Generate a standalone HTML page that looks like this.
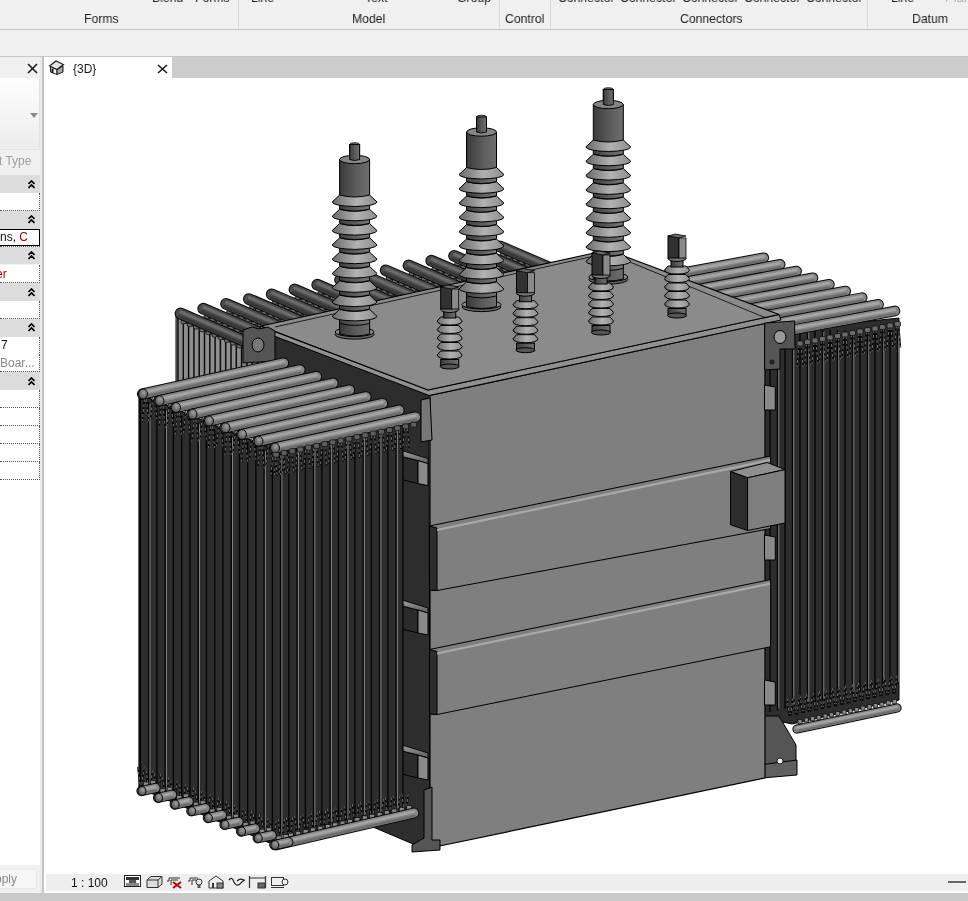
<!DOCTYPE html>
<html><head><meta charset="utf-8"><style>
*{margin:0;padding:0;box-sizing:border-box}
body{width:968px;height:901px;overflow:hidden;background:#fff;position:relative;font-family:"Liberation Sans",sans-serif;font-size:12px;color:#222}
.a{position:absolute}
.t{position:absolute;white-space:nowrap;line-height:14px;will-change:transform}
.model{position:absolute;left:0;top:0}
</style></head><body>
<div class="a" style="left:0;top:0;width:968px;height:29px;background:#f0f0f0"></div>
<div class="a" style="left:0;top:29px;width:968px;height:1px;background:#c6c6c6"></div>
<div class="a" style="left:0;top:30px;width:968px;height:26px;background:#f0f0f0"></div>
<div class="a" style="left:0;top:56px;width:968px;height:1px;background:#c6c6c6"></div>
<div class="a" style="left:238px;top:0;width:1px;height:28px;background:#d8d8d8"></div>
<div class="a" style="left:499px;top:0;width:1px;height:28px;background:#d8d8d8"></div>
<div class="a" style="left:550px;top:0;width:1px;height:28px;background:#d8d8d8"></div>
<div class="a" style="left:867px;top:0;width:1px;height:28px;background:#d8d8d8"></div>
<div class="t" style="left:152px;top:-9px;font-size:13px;transform:scaleX(0.94);transform-origin:0 0">Blend</div>
<div class="t" style="left:195px;top:-9px;font-size:13px;transform:scaleX(0.94);transform-origin:0 0">Forms</div>
<div class="t" style="left:251px;top:-9px;font-size:13px;transform:scaleX(0.94);transform-origin:0 0">Line</div>
<div class="t" style="left:365px;top:-9px;font-size:13px;transform:scaleX(0.94);transform-origin:0 0">Text</div>
<div class="t" style="left:457px;top:-9px;font-size:13px;transform:scaleX(0.94);transform-origin:0 0">Group</div>
<div class="t" style="left:558px;top:-9px;font-size:13px;transform:scaleX(0.94);transform-origin:0 0">Connector</div>
<div class="t" style="left:620px;top:-9px;font-size:13px;transform:scaleX(0.94);transform-origin:0 0">Connector</div>
<div class="t" style="left:682px;top:-9px;font-size:13px;transform:scaleX(0.94);transform-origin:0 0">Connector</div>
<div class="t" style="left:744px;top:-9px;font-size:13px;transform:scaleX(0.94);transform-origin:0 0">Connector</div>
<div class="t" style="left:806px;top:-9px;font-size:13px;transform:scaleX(0.94);transform-origin:0 0">Connector</div>
<div class="t" style="left:891px;top:-9px;font-size:13px;transform:scaleX(0.94);transform-origin:0 0">Line</div>
<div class="t" style="left:945px;top:-9px;color:#b0b0b0;font-size:13px">Plane</div>
<div class="t" style="left:84px;top:12px;font-size:13px;transform:scaleX(0.94);transform-origin:0 0">Forms</div>
<div class="t" style="left:352px;top:12px;font-size:13px;transform:scaleX(0.94);transform-origin:0 0">Model</div>
<div class="t" style="left:505px;top:12px;font-size:13px;transform:scaleX(0.94);transform-origin:0 0">Control</div>
<div class="t" style="left:680px;top:12px;font-size:13px;transform:scaleX(0.94);transform-origin:0 0">Connectors</div>
<div class="t" style="left:912px;top:12px;font-size:13px;transform:scaleX(0.94);transform-origin:0 0">Datum</div>
<!-- left panel -->
<div class="a" style="left:0;top:57px;width:42px;height:836px;background:#f0f0f0"></div>
<div class="a" style="left:40px;top:57px;width:4px;height:836px;background:#eaeaea"></div>
<div class="a" style="left:42px;top:57px;width:1.5px;height:836px;background:#c4c4c4"></div>
<svg class="a" style="left:27px;top:63px" width="11" height="11"><path d="M1,1 L10,10 M10,1 L1,10" stroke="#1a1a1a" stroke-width="1.6"/></svg>
<div class="a" style="left:0;top:78px;width:40px;height:72px;background:linear-gradient(#fdfdfd,#f6f6f6 45%,#ececec);border-right:1px solid #e2e2e2;border-bottom:1px solid #e2e2e2"></div>
<div class="a" style="left:30px;top:113px;width:0;height:0;border-left:4px solid transparent;border-right:4px solid transparent;border-top:5px solid #8a8a8a"></div>
<div class="t" style="left:-1px;top:154px;color:#a0a0a0">t Type</div>
<div class="a" style="left:0;top:175px;width:40px;height:18px;background:#dcdcdc"></div><svg class="a" style="left:28px;top:179.5px" width="7" height="9"><path d="M0.5,4 L3.5,1 L6.5,4 M0.5,8 L3.5,5 L6.5,8" stroke="#000" stroke-width="1.6" fill="none"/></svg><div class="a" style="left:0;top:210.5px;width:40px;height:18px;background:#dcdcdc"></div><svg class="a" style="left:28px;top:215.0px" width="7" height="9"><path d="M0.5,4 L3.5,1 L6.5,4 M0.5,8 L3.5,5 L6.5,8" stroke="#000" stroke-width="1.6" fill="none"/></svg><div class="a" style="left:0;top:246px;width:40px;height:18px;background:#dcdcdc"></div><svg class="a" style="left:28px;top:250.5px" width="7" height="9"><path d="M0.5,4 L3.5,1 L6.5,4 M0.5,8 L3.5,5 L6.5,8" stroke="#000" stroke-width="1.6" fill="none"/></svg><div class="a" style="left:0;top:283px;width:40px;height:18px;background:#dcdcdc"></div><svg class="a" style="left:28px;top:287.5px" width="7" height="9"><path d="M0.5,4 L3.5,1 L6.5,4 M0.5,8 L3.5,5 L6.5,8" stroke="#000" stroke-width="1.6" fill="none"/></svg><div class="a" style="left:0;top:318.5px;width:40px;height:18px;background:#dcdcdc"></div><svg class="a" style="left:28px;top:323.0px" width="7" height="9"><path d="M0.5,4 L3.5,1 L6.5,4 M0.5,8 L3.5,5 L6.5,8" stroke="#000" stroke-width="1.6" fill="none"/></svg><div class="a" style="left:0;top:372px;width:40px;height:18px;background:#dcdcdc"></div><svg class="a" style="left:28px;top:376.5px" width="7" height="9"><path d="M0.5,4 L3.5,1 L6.5,4 M0.5,8 L3.5,5 L6.5,8" stroke="#000" stroke-width="1.6" fill="none"/></svg><div class="a" style="left:0;top:193px;width:40px;height:18px;background:#fff;border-right:1px dotted #555;border-bottom:1px dotted #555"></div><div class="a" style="left:0;top:228.5px;width:40px;height:18px;background:#fff;border-right:1px dotted #555;border-bottom:1px dotted #555"></div><div class="a" style="left:0;top:265px;width:40px;height:18px;background:#fff;border-right:1px dotted #555;border-bottom:1px dotted #555"></div><div class="a" style="left:0;top:300.5px;width:40px;height:18px;background:#fff;border-right:1px dotted #555;border-bottom:1px dotted #555"></div><div class="a" style="left:0;top:336.5px;width:40px;height:18px;background:#fff;border-right:1px dotted #555;border-bottom:1px dotted #555"></div><div class="a" style="left:0;top:354px;width:40px;height:18px;background:#fff;border-right:1px dotted #555;border-bottom:1px dotted #555"></div><div class="a" style="left:0;top:390px;width:40px;height:18px;background:#fff;border-right:1px dotted #555;border-bottom:1px dotted #555"></div><div class="a" style="left:0;top:408px;width:40px;height:18px;background:#fff;border-right:1px dotted #555;border-bottom:1px dotted #555"></div><div class="a" style="left:0;top:426px;width:40px;height:18px;background:#fff;border-right:1px dotted #555;border-bottom:1px dotted #555"></div><div class="a" style="left:0;top:444px;width:40px;height:18px;background:#fff;border-right:1px dotted #555;border-bottom:1px dotted #555"></div><div class="a" style="left:0;top:462px;width:40px;height:18px;background:#fff;border-right:1px dotted #555;border-bottom:1px dotted #555"></div><div class="a" style="left:0;top:228.5px;width:40px;height:17.5px;background:#fff;border:1.5px solid #000;border-left:none"></div><div class="t" style="left:0;top:230px;color:#111">ns, <span style="color:#a00">C</span></div><div class="t" style="left:-4px;top:267px;color:#900">er</div><div class="t" style="left:1px;top:338px;color:#111">7</div><div class="t" style="left:0;top:356px;color:#888">Boar...</div>
<div class="a" style="left:0;top:480px;width:40px;height:385px;background:#fff"></div>
<div class="a" style="left:-3px;top:869px;width:40px;height:20px;background:#f6f6f6;border:1px dotted #dadada;border-radius:3px"></div>
<div class="t" style="left:-5px;top:872px;color:#8a8a8a">pply</div>
<!-- tabs -->
<div class="a" style="left:172px;top:57px;width:796px;height:21px;background:#cccccc"></div>
<svg class="a" style="left:48px;top:60px" width="17" height="15" viewBox="0 0 17 15">
<path d="M2.5,6.5 L9,9.5 L9,14.5 L2.5,12 Z" fill="#fafafa" stroke="#1a1a1a" stroke-width="1"/>
<path d="M9,9.5 L15,6 L15,12 L9,14.5 Z" fill="#a8a8a8" stroke="#1a1a1a" stroke-width="1"/>
<path d="M1.5,6 L8,1 L15.5,4.5 L9,9.5 Z" fill="#e4e4e4" stroke="#1a1a1a" stroke-width="1.1"/>
<rect x="3.5" y="8.5" width="2" height="4.5" fill="#111"/>
</svg>
<div class="t" style="left:73px;top:62px;color:#1a1a1a">{3D}</div>
<svg class="a" style="left:157px;top:64px" width="11" height="10"><path d="M1,1 L10,9 M10,1 L1,9" stroke="#1a1a1a" stroke-width="1.6"/></svg>
<!-- status -->
<div class="a" style="left:46px;top:874px;width:922px;height:17px;background:#eeeeee"></div>
<div class="a" style="left:0;top:893px;width:968px;height:8px;background:#c9c9c9"></div>
<div class="t" style="left:70.5px;top:876px;color:#111">1 : 100</div>
<div class="a" style="left:948px;top:881px;width:18px;height:2px;background:#666"></div>
<svg class="a" style="left:124px;top:875px" width="166" height="14" viewBox="0 0 166 14">
<rect x="0.5" y="0.5" width="16" height="11" fill="#fff" stroke="#222"/><rect x="2" y="2" width="13" height="3" fill="#333"/><rect x="5" y="5" width="7" height="3" fill="#555"/><rect x="2" y="8" width="13" height="3" fill="#888"/>
<path d="M23,5 L27,1.5 L38,1.5 L38,9 L34,12.5 L23,12.5 Z" fill="#ddd" stroke="#333"/><path d="M23,5 L34,5 L38,1.5 M34,5 L34,12.5" fill="none" stroke="#333"/>
<path d="M43,6 L45,6 L45,3 L56,3 M47,10 L47,5 L54,5" fill="none" stroke="#333"/><path d="M49,7 L57,13 M57,7 L49,13" stroke="#b00" stroke-width="2"/>
<path d="M64,6 L66,6 L66,3 L74,3 M68,10 L68,5 L72,5" fill="none" stroke="#333"/><circle cx="75" cy="7" r="3" fill="#eee" stroke="#333"/><rect x="73.5" y="10" width="3" height="3" fill="#555"/>
<path d="M85,6 L92,1 L99,6 L99,13 L85,13 Z" fill="#eee" stroke="#333"/><rect x="93" y="8" width="6" height="5" fill="#888" stroke="#333"/><rect x="88" y="8" width="2" height="5" fill="#333"/>
<path d="M105,5 Q108,1 110,7 Q112,12 116,9 Q118,6 121,5 M113,6 Q116,3 120,5" fill="none" stroke="#222" stroke-width="1.3"/>
<path d="M125.5,1 L125.5,13 M141.5,1 L141.5,13 M126,3 L141,3" stroke="#333" stroke-width="1.2" fill="none"/><rect x="134" y="8" width="7" height="5" fill="#666" stroke="#333"/>
<rect x="147.5" y="2.5" width="12" height="8" fill="#eee" stroke="#333"/><path d="M147,12.5 L160,12.5" stroke="#333"/><circle cx="161" cy="7" r="3" fill="#eee" stroke="#333"/>
</svg>
<svg class="model" width="968" height="901" viewBox="0 0 968 901"><defs>
<radialGradient id="gc" cx="0.6" cy="0.35" r="0.7"><stop offset="0" stop-color="#a0a0a0"/><stop offset="1" stop-color="#4a4a4a"/></radialGradient>
<linearGradient id="gt" x1="0" x2="0" y1="0" y2="1"><stop offset="0" stop-color="#a0a0a0"/><stop offset="1" stop-color="#5a5a5a"/></linearGradient>
<linearGradient id="gb" x1="0" x2="1" y1="0" y2="0"><stop offset="0" stop-color="#3a3a3a"/><stop offset="0.55" stop-color="#5c5c5c"/><stop offset="1" stop-color="#6e6e6e"/></linearGradient>
<linearGradient id="gd" x1="0" x2="1" y1="0" y2="0"><stop offset="0" stop-color="#3e3e3e"/><stop offset="0.6" stop-color="#626262"/><stop offset="1" stop-color="#777"/></linearGradient>
<linearGradient id="gs" x1="0" x2="1" y1="0" y2="0"><stop offset="0" stop-color="#6a6a6a"/><stop offset="0.55" stop-color="#b2b2b2"/><stop offset="1" stop-color="#8e8e8e"/></linearGradient>
</defs><polygon points="176.0,316.0 275.0,358.0 275.0,368.0 176.0,385.0" fill="#8e8e8e" stroke="#000" stroke-width="1" stroke-linejoin="round" /><line x1="178.0" y1="317.9" x2="178.0" y2="382.6" stroke="#0c0c0c" stroke-width="1.5" stroke-linecap="butt" /><line x1="183.3" y1="320.1" x2="183.3" y2="381.5" stroke="#0c0c0c" stroke-width="1.5" stroke-linecap="butt" /><line x1="188.6" y1="322.4" x2="188.6" y2="380.5" stroke="#0c0c0c" stroke-width="1.5" stroke-linecap="butt" /><line x1="193.9" y1="324.7" x2="193.9" y2="379.4" stroke="#0c0c0c" stroke-width="1.5" stroke-linecap="butt" /><line x1="199.2" y1="327.0" x2="199.2" y2="378.4" stroke="#0c0c0c" stroke-width="1.5" stroke-linecap="butt" /><line x1="204.5" y1="329.3" x2="204.5" y2="377.3" stroke="#0c0c0c" stroke-width="1.5" stroke-linecap="butt" /><line x1="209.8" y1="331.5" x2="209.8" y2="376.2" stroke="#0c0c0c" stroke-width="1.5" stroke-linecap="butt" /><line x1="215.1" y1="333.8" x2="215.1" y2="375.2" stroke="#0c0c0c" stroke-width="1.5" stroke-linecap="butt" /><line x1="220.4" y1="336.1" x2="220.4" y2="374.1" stroke="#0c0c0c" stroke-width="1.5" stroke-linecap="butt" /><line x1="225.7" y1="338.4" x2="225.7" y2="373.1" stroke="#0c0c0c" stroke-width="1.5" stroke-linecap="butt" /><line x1="231.0" y1="340.7" x2="231.0" y2="372.0" stroke="#0c0c0c" stroke-width="1.5" stroke-linecap="butt" /><line x1="236.3" y1="342.9" x2="236.3" y2="370.9" stroke="#0c0c0c" stroke-width="1.5" stroke-linecap="butt" /><line x1="241.6" y1="345.2" x2="241.6" y2="369.9" stroke="#0c0c0c" stroke-width="1.5" stroke-linecap="butt" /><line x1="246.9" y1="347.5" x2="246.9" y2="368.8" stroke="#0c0c0c" stroke-width="1.5" stroke-linecap="butt" /><line x1="252.2" y1="349.8" x2="252.2" y2="367.8" stroke="#0c0c0c" stroke-width="1.5" stroke-linecap="butt" /><line x1="257.5" y1="352.0" x2="257.5" y2="366.7" stroke="#0c0c0c" stroke-width="1.5" stroke-linecap="butt" /><line x1="501.7" y1="252.8" x2="621.7" y2="304.4" stroke="#2a2a2a" stroke-width="4.5" stroke-linecap="butt" /><ellipse cx="502.7" cy="254.6" rx="2.6" ry="2.2" fill="#6a6a6a" stroke="#111" stroke-width="0.8"/><ellipse cx="508.9" cy="257.3" rx="2.6" ry="2.2" fill="#6a6a6a" stroke="#111" stroke-width="0.8"/><ellipse cx="515.1" cy="259.9" rx="2.6" ry="2.2" fill="#6a6a6a" stroke="#111" stroke-width="0.8"/><ellipse cx="521.3" cy="262.6" rx="2.6" ry="2.2" fill="#6a6a6a" stroke="#111" stroke-width="0.8"/><ellipse cx="527.5" cy="265.3" rx="2.6" ry="2.2" fill="#6a6a6a" stroke="#111" stroke-width="0.8"/><ellipse cx="533.7" cy="267.9" rx="2.6" ry="2.2" fill="#6a6a6a" stroke="#111" stroke-width="0.8"/><ellipse cx="539.9" cy="270.6" rx="2.6" ry="2.2" fill="#6a6a6a" stroke="#111" stroke-width="0.8"/><ellipse cx="546.1" cy="273.3" rx="2.6" ry="2.2" fill="#6a6a6a" stroke="#111" stroke-width="0.8"/><ellipse cx="552.3" cy="275.9" rx="2.6" ry="2.2" fill="#6a6a6a" stroke="#111" stroke-width="0.8"/><ellipse cx="558.5" cy="278.6" rx="2.6" ry="2.2" fill="#6a6a6a" stroke="#111" stroke-width="0.8"/><ellipse cx="564.7" cy="281.2" rx="2.6" ry="2.2" fill="#6a6a6a" stroke="#111" stroke-width="0.8"/><ellipse cx="570.9" cy="283.9" rx="2.6" ry="2.2" fill="#6a6a6a" stroke="#111" stroke-width="0.8"/><ellipse cx="577.1" cy="286.6" rx="2.6" ry="2.2" fill="#6a6a6a" stroke="#111" stroke-width="0.8"/><ellipse cx="583.3" cy="289.2" rx="2.6" ry="2.2" fill="#6a6a6a" stroke="#111" stroke-width="0.8"/><ellipse cx="589.5" cy="291.9" rx="2.6" ry="2.2" fill="#6a6a6a" stroke="#111" stroke-width="0.8"/><line x1="499.7" y1="246.3" x2="619.7" y2="297.9" stroke="#0a0a0a" stroke-width="11.8" stroke-linecap="round" /><line x1="499.7" y1="246.3" x2="619.7" y2="297.9" stroke="#4b4b4b" stroke-width="9.8" stroke-linecap="round" /><line x1="500.3" y1="244.9" x2="620.3" y2="296.5" stroke="#6a6a6a" stroke-width="3.2" stroke-linecap="round" /><line x1="498.4" y1="249.2" x2="618.4" y2="300.8" stroke="#383838" stroke-width="2.8000000000000003" stroke-linecap="round" /><line x1="478.9" y1="257.6" x2="598.9" y2="309.2" stroke="#2a2a2a" stroke-width="4.5" stroke-linecap="butt" /><ellipse cx="479.9" cy="259.4" rx="2.6" ry="2.2" fill="#6a6a6a" stroke="#111" stroke-width="0.8"/><ellipse cx="486.1" cy="262.1" rx="2.6" ry="2.2" fill="#6a6a6a" stroke="#111" stroke-width="0.8"/><ellipse cx="492.3" cy="264.7" rx="2.6" ry="2.2" fill="#6a6a6a" stroke="#111" stroke-width="0.8"/><ellipse cx="498.5" cy="267.4" rx="2.6" ry="2.2" fill="#6a6a6a" stroke="#111" stroke-width="0.8"/><ellipse cx="504.7" cy="270.1" rx="2.6" ry="2.2" fill="#6a6a6a" stroke="#111" stroke-width="0.8"/><ellipse cx="510.9" cy="272.7" rx="2.6" ry="2.2" fill="#6a6a6a" stroke="#111" stroke-width="0.8"/><ellipse cx="517.1" cy="275.4" rx="2.6" ry="2.2" fill="#6a6a6a" stroke="#111" stroke-width="0.8"/><ellipse cx="523.3" cy="278.1" rx="2.6" ry="2.2" fill="#6a6a6a" stroke="#111" stroke-width="0.8"/><ellipse cx="529.5" cy="280.7" rx="2.6" ry="2.2" fill="#6a6a6a" stroke="#111" stroke-width="0.8"/><ellipse cx="535.7" cy="283.4" rx="2.6" ry="2.2" fill="#6a6a6a" stroke="#111" stroke-width="0.8"/><ellipse cx="541.9" cy="286.1" rx="2.6" ry="2.2" fill="#6a6a6a" stroke="#111" stroke-width="0.8"/><ellipse cx="548.1" cy="288.7" rx="2.6" ry="2.2" fill="#6a6a6a" stroke="#111" stroke-width="0.8"/><ellipse cx="554.3" cy="291.4" rx="2.6" ry="2.2" fill="#6a6a6a" stroke="#111" stroke-width="0.8"/><ellipse cx="560.5" cy="294.0" rx="2.6" ry="2.2" fill="#6a6a6a" stroke="#111" stroke-width="0.8"/><ellipse cx="566.7" cy="296.7" rx="2.6" ry="2.2" fill="#6a6a6a" stroke="#111" stroke-width="0.8"/><line x1="476.9" y1="251.1" x2="596.9" y2="302.7" stroke="#0a0a0a" stroke-width="11.8" stroke-linecap="round" /><line x1="476.9" y1="251.1" x2="596.9" y2="302.7" stroke="#4b4b4b" stroke-width="9.8" stroke-linecap="round" /><line x1="477.5" y1="249.7" x2="597.5" y2="301.3" stroke="#6a6a6a" stroke-width="3.2" stroke-linecap="round" /><line x1="475.6" y1="254.0" x2="595.6" y2="305.6" stroke="#383838" stroke-width="2.8000000000000003" stroke-linecap="round" /><line x1="456.1" y1="262.4" x2="576.1" y2="314.0" stroke="#2a2a2a" stroke-width="4.5" stroke-linecap="butt" /><ellipse cx="457.1" cy="264.2" rx="2.6" ry="2.2" fill="#6a6a6a" stroke="#111" stroke-width="0.8"/><ellipse cx="463.3" cy="266.9" rx="2.6" ry="2.2" fill="#6a6a6a" stroke="#111" stroke-width="0.8"/><ellipse cx="469.5" cy="269.5" rx="2.6" ry="2.2" fill="#6a6a6a" stroke="#111" stroke-width="0.8"/><ellipse cx="475.7" cy="272.2" rx="2.6" ry="2.2" fill="#6a6a6a" stroke="#111" stroke-width="0.8"/><ellipse cx="481.9" cy="274.9" rx="2.6" ry="2.2" fill="#6a6a6a" stroke="#111" stroke-width="0.8"/><ellipse cx="488.1" cy="277.5" rx="2.6" ry="2.2" fill="#6a6a6a" stroke="#111" stroke-width="0.8"/><ellipse cx="494.3" cy="280.2" rx="2.6" ry="2.2" fill="#6a6a6a" stroke="#111" stroke-width="0.8"/><ellipse cx="500.5" cy="282.9" rx="2.6" ry="2.2" fill="#6a6a6a" stroke="#111" stroke-width="0.8"/><ellipse cx="506.7" cy="285.5" rx="2.6" ry="2.2" fill="#6a6a6a" stroke="#111" stroke-width="0.8"/><ellipse cx="512.9" cy="288.2" rx="2.6" ry="2.2" fill="#6a6a6a" stroke="#111" stroke-width="0.8"/><ellipse cx="519.1" cy="290.8" rx="2.6" ry="2.2" fill="#6a6a6a" stroke="#111" stroke-width="0.8"/><ellipse cx="525.3" cy="293.5" rx="2.6" ry="2.2" fill="#6a6a6a" stroke="#111" stroke-width="0.8"/><ellipse cx="531.5" cy="296.2" rx="2.6" ry="2.2" fill="#6a6a6a" stroke="#111" stroke-width="0.8"/><ellipse cx="537.7" cy="298.8" rx="2.6" ry="2.2" fill="#6a6a6a" stroke="#111" stroke-width="0.8"/><ellipse cx="543.9" cy="301.5" rx="2.6" ry="2.2" fill="#6a6a6a" stroke="#111" stroke-width="0.8"/><line x1="454.1" y1="255.9" x2="574.1" y2="307.5" stroke="#0a0a0a" stroke-width="11.8" stroke-linecap="round" /><line x1="454.1" y1="255.9" x2="574.1" y2="307.5" stroke="#4b4b4b" stroke-width="9.8" stroke-linecap="round" /><line x1="454.7" y1="254.5" x2="574.7" y2="306.1" stroke="#6a6a6a" stroke-width="3.2" stroke-linecap="round" /><line x1="452.8" y1="258.8" x2="572.8" y2="310.4" stroke="#383838" stroke-width="2.8000000000000003" stroke-linecap="round" /><line x1="433.3" y1="267.2" x2="553.3" y2="318.8" stroke="#2a2a2a" stroke-width="4.5" stroke-linecap="butt" /><ellipse cx="434.3" cy="269.0" rx="2.6" ry="2.2" fill="#6a6a6a" stroke="#111" stroke-width="0.8"/><ellipse cx="440.5" cy="271.7" rx="2.6" ry="2.2" fill="#6a6a6a" stroke="#111" stroke-width="0.8"/><ellipse cx="446.7" cy="274.3" rx="2.6" ry="2.2" fill="#6a6a6a" stroke="#111" stroke-width="0.8"/><ellipse cx="452.9" cy="277.0" rx="2.6" ry="2.2" fill="#6a6a6a" stroke="#111" stroke-width="0.8"/><ellipse cx="459.1" cy="279.7" rx="2.6" ry="2.2" fill="#6a6a6a" stroke="#111" stroke-width="0.8"/><ellipse cx="465.3" cy="282.3" rx="2.6" ry="2.2" fill="#6a6a6a" stroke="#111" stroke-width="0.8"/><ellipse cx="471.5" cy="285.0" rx="2.6" ry="2.2" fill="#6a6a6a" stroke="#111" stroke-width="0.8"/><ellipse cx="477.7" cy="287.7" rx="2.6" ry="2.2" fill="#6a6a6a" stroke="#111" stroke-width="0.8"/><ellipse cx="483.9" cy="290.3" rx="2.6" ry="2.2" fill="#6a6a6a" stroke="#111" stroke-width="0.8"/><ellipse cx="490.1" cy="293.0" rx="2.6" ry="2.2" fill="#6a6a6a" stroke="#111" stroke-width="0.8"/><ellipse cx="496.3" cy="295.6" rx="2.6" ry="2.2" fill="#6a6a6a" stroke="#111" stroke-width="0.8"/><ellipse cx="502.5" cy="298.3" rx="2.6" ry="2.2" fill="#6a6a6a" stroke="#111" stroke-width="0.8"/><ellipse cx="508.7" cy="301.0" rx="2.6" ry="2.2" fill="#6a6a6a" stroke="#111" stroke-width="0.8"/><ellipse cx="514.9" cy="303.6" rx="2.6" ry="2.2" fill="#6a6a6a" stroke="#111" stroke-width="0.8"/><ellipse cx="521.1" cy="306.3" rx="2.6" ry="2.2" fill="#6a6a6a" stroke="#111" stroke-width="0.8"/><line x1="431.3" y1="260.7" x2="551.3" y2="312.3" stroke="#0a0a0a" stroke-width="11.8" stroke-linecap="round" /><line x1="431.3" y1="260.7" x2="551.3" y2="312.3" stroke="#4b4b4b" stroke-width="9.8" stroke-linecap="round" /><line x1="431.9" y1="259.3" x2="551.9" y2="310.9" stroke="#6a6a6a" stroke-width="3.2" stroke-linecap="round" /><line x1="430.0" y1="263.6" x2="550.0" y2="315.2" stroke="#383838" stroke-width="2.8000000000000003" stroke-linecap="round" /><line x1="410.5" y1="272.0" x2="530.5" y2="323.6" stroke="#2a2a2a" stroke-width="4.5" stroke-linecap="butt" /><ellipse cx="411.5" cy="273.8" rx="2.6" ry="2.2" fill="#6a6a6a" stroke="#111" stroke-width="0.8"/><ellipse cx="417.7" cy="276.5" rx="2.6" ry="2.2" fill="#6a6a6a" stroke="#111" stroke-width="0.8"/><ellipse cx="423.9" cy="279.1" rx="2.6" ry="2.2" fill="#6a6a6a" stroke="#111" stroke-width="0.8"/><ellipse cx="430.1" cy="281.8" rx="2.6" ry="2.2" fill="#6a6a6a" stroke="#111" stroke-width="0.8"/><ellipse cx="436.3" cy="284.5" rx="2.6" ry="2.2" fill="#6a6a6a" stroke="#111" stroke-width="0.8"/><ellipse cx="442.5" cy="287.1" rx="2.6" ry="2.2" fill="#6a6a6a" stroke="#111" stroke-width="0.8"/><ellipse cx="448.7" cy="289.8" rx="2.6" ry="2.2" fill="#6a6a6a" stroke="#111" stroke-width="0.8"/><ellipse cx="454.9" cy="292.5" rx="2.6" ry="2.2" fill="#6a6a6a" stroke="#111" stroke-width="0.8"/><ellipse cx="461.1" cy="295.1" rx="2.6" ry="2.2" fill="#6a6a6a" stroke="#111" stroke-width="0.8"/><ellipse cx="467.3" cy="297.8" rx="2.6" ry="2.2" fill="#6a6a6a" stroke="#111" stroke-width="0.8"/><ellipse cx="473.5" cy="300.4" rx="2.6" ry="2.2" fill="#6a6a6a" stroke="#111" stroke-width="0.8"/><ellipse cx="479.7" cy="303.1" rx="2.6" ry="2.2" fill="#6a6a6a" stroke="#111" stroke-width="0.8"/><ellipse cx="485.9" cy="305.8" rx="2.6" ry="2.2" fill="#6a6a6a" stroke="#111" stroke-width="0.8"/><ellipse cx="492.1" cy="308.4" rx="2.6" ry="2.2" fill="#6a6a6a" stroke="#111" stroke-width="0.8"/><ellipse cx="498.3" cy="311.1" rx="2.6" ry="2.2" fill="#6a6a6a" stroke="#111" stroke-width="0.8"/><line x1="408.5" y1="265.5" x2="528.5" y2="317.1" stroke="#0a0a0a" stroke-width="11.8" stroke-linecap="round" /><line x1="408.5" y1="265.5" x2="528.5" y2="317.1" stroke="#4b4b4b" stroke-width="9.8" stroke-linecap="round" /><line x1="409.1" y1="264.1" x2="529.1" y2="315.7" stroke="#6a6a6a" stroke-width="3.2" stroke-linecap="round" /><line x1="407.2" y1="268.4" x2="527.2" y2="320.0" stroke="#383838" stroke-width="2.8000000000000003" stroke-linecap="round" /><line x1="387.7" y1="276.8" x2="507.7" y2="328.4" stroke="#2a2a2a" stroke-width="4.5" stroke-linecap="butt" /><ellipse cx="388.7" cy="278.6" rx="2.6" ry="2.2" fill="#6a6a6a" stroke="#111" stroke-width="0.8"/><ellipse cx="394.9" cy="281.3" rx="2.6" ry="2.2" fill="#6a6a6a" stroke="#111" stroke-width="0.8"/><ellipse cx="401.1" cy="283.9" rx="2.6" ry="2.2" fill="#6a6a6a" stroke="#111" stroke-width="0.8"/><ellipse cx="407.3" cy="286.6" rx="2.6" ry="2.2" fill="#6a6a6a" stroke="#111" stroke-width="0.8"/><ellipse cx="413.5" cy="289.3" rx="2.6" ry="2.2" fill="#6a6a6a" stroke="#111" stroke-width="0.8"/><ellipse cx="419.7" cy="291.9" rx="2.6" ry="2.2" fill="#6a6a6a" stroke="#111" stroke-width="0.8"/><ellipse cx="425.9" cy="294.6" rx="2.6" ry="2.2" fill="#6a6a6a" stroke="#111" stroke-width="0.8"/><ellipse cx="432.1" cy="297.3" rx="2.6" ry="2.2" fill="#6a6a6a" stroke="#111" stroke-width="0.8"/><ellipse cx="438.3" cy="299.9" rx="2.6" ry="2.2" fill="#6a6a6a" stroke="#111" stroke-width="0.8"/><ellipse cx="444.5" cy="302.6" rx="2.6" ry="2.2" fill="#6a6a6a" stroke="#111" stroke-width="0.8"/><ellipse cx="450.7" cy="305.2" rx="2.6" ry="2.2" fill="#6a6a6a" stroke="#111" stroke-width="0.8"/><ellipse cx="456.9" cy="307.9" rx="2.6" ry="2.2" fill="#6a6a6a" stroke="#111" stroke-width="0.8"/><ellipse cx="463.1" cy="310.6" rx="2.6" ry="2.2" fill="#6a6a6a" stroke="#111" stroke-width="0.8"/><ellipse cx="469.3" cy="313.2" rx="2.6" ry="2.2" fill="#6a6a6a" stroke="#111" stroke-width="0.8"/><ellipse cx="475.5" cy="315.9" rx="2.6" ry="2.2" fill="#6a6a6a" stroke="#111" stroke-width="0.8"/><line x1="385.7" y1="270.3" x2="505.7" y2="321.9" stroke="#0a0a0a" stroke-width="11.8" stroke-linecap="round" /><line x1="385.7" y1="270.3" x2="505.7" y2="321.9" stroke="#4b4b4b" stroke-width="9.8" stroke-linecap="round" /><line x1="386.3" y1="268.9" x2="506.3" y2="320.5" stroke="#6a6a6a" stroke-width="3.2" stroke-linecap="round" /><line x1="384.4" y1="273.2" x2="504.4" y2="324.8" stroke="#383838" stroke-width="2.8000000000000003" stroke-linecap="round" /><line x1="364.9" y1="281.6" x2="484.9" y2="333.2" stroke="#2a2a2a" stroke-width="4.5" stroke-linecap="butt" /><ellipse cx="365.9" cy="283.4" rx="2.6" ry="2.2" fill="#6a6a6a" stroke="#111" stroke-width="0.8"/><ellipse cx="372.1" cy="286.1" rx="2.6" ry="2.2" fill="#6a6a6a" stroke="#111" stroke-width="0.8"/><ellipse cx="378.3" cy="288.7" rx="2.6" ry="2.2" fill="#6a6a6a" stroke="#111" stroke-width="0.8"/><ellipse cx="384.5" cy="291.4" rx="2.6" ry="2.2" fill="#6a6a6a" stroke="#111" stroke-width="0.8"/><ellipse cx="390.7" cy="294.1" rx="2.6" ry="2.2" fill="#6a6a6a" stroke="#111" stroke-width="0.8"/><ellipse cx="396.9" cy="296.7" rx="2.6" ry="2.2" fill="#6a6a6a" stroke="#111" stroke-width="0.8"/><ellipse cx="403.1" cy="299.4" rx="2.6" ry="2.2" fill="#6a6a6a" stroke="#111" stroke-width="0.8"/><ellipse cx="409.3" cy="302.1" rx="2.6" ry="2.2" fill="#6a6a6a" stroke="#111" stroke-width="0.8"/><ellipse cx="415.5" cy="304.7" rx="2.6" ry="2.2" fill="#6a6a6a" stroke="#111" stroke-width="0.8"/><ellipse cx="421.7" cy="307.4" rx="2.6" ry="2.2" fill="#6a6a6a" stroke="#111" stroke-width="0.8"/><ellipse cx="427.9" cy="310.1" rx="2.6" ry="2.2" fill="#6a6a6a" stroke="#111" stroke-width="0.8"/><ellipse cx="434.1" cy="312.7" rx="2.6" ry="2.2" fill="#6a6a6a" stroke="#111" stroke-width="0.8"/><ellipse cx="440.3" cy="315.4" rx="2.6" ry="2.2" fill="#6a6a6a" stroke="#111" stroke-width="0.8"/><ellipse cx="446.5" cy="318.0" rx="2.6" ry="2.2" fill="#6a6a6a" stroke="#111" stroke-width="0.8"/><ellipse cx="452.7" cy="320.7" rx="2.6" ry="2.2" fill="#6a6a6a" stroke="#111" stroke-width="0.8"/><line x1="362.9" y1="275.1" x2="482.9" y2="326.7" stroke="#0a0a0a" stroke-width="11.8" stroke-linecap="round" /><line x1="362.9" y1="275.1" x2="482.9" y2="326.7" stroke="#4b4b4b" stroke-width="9.8" stroke-linecap="round" /><line x1="363.5" y1="273.7" x2="483.5" y2="325.3" stroke="#6a6a6a" stroke-width="3.2" stroke-linecap="round" /><line x1="361.6" y1="278.0" x2="481.6" y2="329.6" stroke="#383838" stroke-width="2.8000000000000003" stroke-linecap="round" /><line x1="342.1" y1="286.4" x2="462.1" y2="338.0" stroke="#2a2a2a" stroke-width="4.5" stroke-linecap="butt" /><ellipse cx="343.1" cy="288.2" rx="2.6" ry="2.2" fill="#6a6a6a" stroke="#111" stroke-width="0.8"/><ellipse cx="349.3" cy="290.9" rx="2.6" ry="2.2" fill="#6a6a6a" stroke="#111" stroke-width="0.8"/><ellipse cx="355.5" cy="293.5" rx="2.6" ry="2.2" fill="#6a6a6a" stroke="#111" stroke-width="0.8"/><ellipse cx="361.7" cy="296.2" rx="2.6" ry="2.2" fill="#6a6a6a" stroke="#111" stroke-width="0.8"/><ellipse cx="367.9" cy="298.9" rx="2.6" ry="2.2" fill="#6a6a6a" stroke="#111" stroke-width="0.8"/><ellipse cx="374.1" cy="301.5" rx="2.6" ry="2.2" fill="#6a6a6a" stroke="#111" stroke-width="0.8"/><ellipse cx="380.3" cy="304.2" rx="2.6" ry="2.2" fill="#6a6a6a" stroke="#111" stroke-width="0.8"/><ellipse cx="386.5" cy="306.9" rx="2.6" ry="2.2" fill="#6a6a6a" stroke="#111" stroke-width="0.8"/><ellipse cx="392.7" cy="309.5" rx="2.6" ry="2.2" fill="#6a6a6a" stroke="#111" stroke-width="0.8"/><ellipse cx="398.9" cy="312.2" rx="2.6" ry="2.2" fill="#6a6a6a" stroke="#111" stroke-width="0.8"/><ellipse cx="405.1" cy="314.8" rx="2.6" ry="2.2" fill="#6a6a6a" stroke="#111" stroke-width="0.8"/><ellipse cx="411.3" cy="317.5" rx="2.6" ry="2.2" fill="#6a6a6a" stroke="#111" stroke-width="0.8"/><ellipse cx="417.5" cy="320.2" rx="2.6" ry="2.2" fill="#6a6a6a" stroke="#111" stroke-width="0.8"/><ellipse cx="423.7" cy="322.8" rx="2.6" ry="2.2" fill="#6a6a6a" stroke="#111" stroke-width="0.8"/><ellipse cx="429.9" cy="325.5" rx="2.6" ry="2.2" fill="#6a6a6a" stroke="#111" stroke-width="0.8"/><line x1="340.1" y1="279.9" x2="460.1" y2="331.5" stroke="#0a0a0a" stroke-width="11.8" stroke-linecap="round" /><line x1="340.1" y1="279.9" x2="460.1" y2="331.5" stroke="#4b4b4b" stroke-width="9.8" stroke-linecap="round" /><line x1="340.7" y1="278.5" x2="460.7" y2="330.1" stroke="#6a6a6a" stroke-width="3.2" stroke-linecap="round" /><line x1="338.8" y1="282.8" x2="458.8" y2="334.4" stroke="#383838" stroke-width="2.8000000000000003" stroke-linecap="round" /><line x1="319.3" y1="291.2" x2="439.3" y2="342.8" stroke="#2a2a2a" stroke-width="4.5" stroke-linecap="butt" /><ellipse cx="320.3" cy="293.0" rx="2.6" ry="2.2" fill="#6a6a6a" stroke="#111" stroke-width="0.8"/><ellipse cx="326.5" cy="295.7" rx="2.6" ry="2.2" fill="#6a6a6a" stroke="#111" stroke-width="0.8"/><ellipse cx="332.7" cy="298.3" rx="2.6" ry="2.2" fill="#6a6a6a" stroke="#111" stroke-width="0.8"/><ellipse cx="338.9" cy="301.0" rx="2.6" ry="2.2" fill="#6a6a6a" stroke="#111" stroke-width="0.8"/><ellipse cx="345.1" cy="303.7" rx="2.6" ry="2.2" fill="#6a6a6a" stroke="#111" stroke-width="0.8"/><ellipse cx="351.3" cy="306.3" rx="2.6" ry="2.2" fill="#6a6a6a" stroke="#111" stroke-width="0.8"/><ellipse cx="357.5" cy="309.0" rx="2.6" ry="2.2" fill="#6a6a6a" stroke="#111" stroke-width="0.8"/><ellipse cx="363.7" cy="311.7" rx="2.6" ry="2.2" fill="#6a6a6a" stroke="#111" stroke-width="0.8"/><ellipse cx="369.9" cy="314.3" rx="2.6" ry="2.2" fill="#6a6a6a" stroke="#111" stroke-width="0.8"/><ellipse cx="376.1" cy="317.0" rx="2.6" ry="2.2" fill="#6a6a6a" stroke="#111" stroke-width="0.8"/><ellipse cx="382.3" cy="319.6" rx="2.6" ry="2.2" fill="#6a6a6a" stroke="#111" stroke-width="0.8"/><ellipse cx="388.5" cy="322.3" rx="2.6" ry="2.2" fill="#6a6a6a" stroke="#111" stroke-width="0.8"/><ellipse cx="394.7" cy="325.0" rx="2.6" ry="2.2" fill="#6a6a6a" stroke="#111" stroke-width="0.8"/><ellipse cx="400.9" cy="327.6" rx="2.6" ry="2.2" fill="#6a6a6a" stroke="#111" stroke-width="0.8"/><ellipse cx="407.1" cy="330.3" rx="2.6" ry="2.2" fill="#6a6a6a" stroke="#111" stroke-width="0.8"/><line x1="317.3" y1="284.7" x2="437.3" y2="336.3" stroke="#0a0a0a" stroke-width="11.8" stroke-linecap="round" /><line x1="317.3" y1="284.7" x2="437.3" y2="336.3" stroke="#4b4b4b" stroke-width="9.8" stroke-linecap="round" /><line x1="317.9" y1="283.3" x2="437.9" y2="334.9" stroke="#6a6a6a" stroke-width="3.2" stroke-linecap="round" /><line x1="316.0" y1="287.6" x2="436.0" y2="339.2" stroke="#383838" stroke-width="2.8000000000000003" stroke-linecap="round" /><line x1="296.5" y1="296.0" x2="416.5" y2="347.6" stroke="#2a2a2a" stroke-width="4.5" stroke-linecap="butt" /><ellipse cx="297.5" cy="297.8" rx="2.6" ry="2.2" fill="#6a6a6a" stroke="#111" stroke-width="0.8"/><ellipse cx="303.7" cy="300.5" rx="2.6" ry="2.2" fill="#6a6a6a" stroke="#111" stroke-width="0.8"/><ellipse cx="309.9" cy="303.1" rx="2.6" ry="2.2" fill="#6a6a6a" stroke="#111" stroke-width="0.8"/><ellipse cx="316.1" cy="305.8" rx="2.6" ry="2.2" fill="#6a6a6a" stroke="#111" stroke-width="0.8"/><ellipse cx="322.3" cy="308.5" rx="2.6" ry="2.2" fill="#6a6a6a" stroke="#111" stroke-width="0.8"/><ellipse cx="328.5" cy="311.1" rx="2.6" ry="2.2" fill="#6a6a6a" stroke="#111" stroke-width="0.8"/><ellipse cx="334.7" cy="313.8" rx="2.6" ry="2.2" fill="#6a6a6a" stroke="#111" stroke-width="0.8"/><ellipse cx="340.9" cy="316.5" rx="2.6" ry="2.2" fill="#6a6a6a" stroke="#111" stroke-width="0.8"/><ellipse cx="347.1" cy="319.1" rx="2.6" ry="2.2" fill="#6a6a6a" stroke="#111" stroke-width="0.8"/><ellipse cx="353.3" cy="321.8" rx="2.6" ry="2.2" fill="#6a6a6a" stroke="#111" stroke-width="0.8"/><ellipse cx="359.5" cy="324.4" rx="2.6" ry="2.2" fill="#6a6a6a" stroke="#111" stroke-width="0.8"/><ellipse cx="365.7" cy="327.1" rx="2.6" ry="2.2" fill="#6a6a6a" stroke="#111" stroke-width="0.8"/><ellipse cx="371.9" cy="329.8" rx="2.6" ry="2.2" fill="#6a6a6a" stroke="#111" stroke-width="0.8"/><ellipse cx="378.1" cy="332.4" rx="2.6" ry="2.2" fill="#6a6a6a" stroke="#111" stroke-width="0.8"/><ellipse cx="384.3" cy="335.1" rx="2.6" ry="2.2" fill="#6a6a6a" stroke="#111" stroke-width="0.8"/><line x1="294.5" y1="289.5" x2="414.5" y2="341.1" stroke="#0a0a0a" stroke-width="11.8" stroke-linecap="round" /><line x1="294.5" y1="289.5" x2="414.5" y2="341.1" stroke="#4b4b4b" stroke-width="9.8" stroke-linecap="round" /><line x1="295.1" y1="288.1" x2="415.1" y2="339.7" stroke="#6a6a6a" stroke-width="3.2" stroke-linecap="round" /><line x1="293.2" y1="292.4" x2="413.2" y2="344.0" stroke="#383838" stroke-width="2.8000000000000003" stroke-linecap="round" /><line x1="273.7" y1="300.8" x2="393.7" y2="352.4" stroke="#2a2a2a" stroke-width="4.5" stroke-linecap="butt" /><ellipse cx="274.7" cy="302.6" rx="2.6" ry="2.2" fill="#6a6a6a" stroke="#111" stroke-width="0.8"/><ellipse cx="280.9" cy="305.3" rx="2.6" ry="2.2" fill="#6a6a6a" stroke="#111" stroke-width="0.8"/><ellipse cx="287.1" cy="307.9" rx="2.6" ry="2.2" fill="#6a6a6a" stroke="#111" stroke-width="0.8"/><ellipse cx="293.3" cy="310.6" rx="2.6" ry="2.2" fill="#6a6a6a" stroke="#111" stroke-width="0.8"/><ellipse cx="299.5" cy="313.3" rx="2.6" ry="2.2" fill="#6a6a6a" stroke="#111" stroke-width="0.8"/><ellipse cx="305.7" cy="315.9" rx="2.6" ry="2.2" fill="#6a6a6a" stroke="#111" stroke-width="0.8"/><ellipse cx="311.9" cy="318.6" rx="2.6" ry="2.2" fill="#6a6a6a" stroke="#111" stroke-width="0.8"/><ellipse cx="318.1" cy="321.3" rx="2.6" ry="2.2" fill="#6a6a6a" stroke="#111" stroke-width="0.8"/><ellipse cx="324.3" cy="323.9" rx="2.6" ry="2.2" fill="#6a6a6a" stroke="#111" stroke-width="0.8"/><ellipse cx="330.5" cy="326.6" rx="2.6" ry="2.2" fill="#6a6a6a" stroke="#111" stroke-width="0.8"/><ellipse cx="336.7" cy="329.2" rx="2.6" ry="2.2" fill="#6a6a6a" stroke="#111" stroke-width="0.8"/><ellipse cx="342.9" cy="331.9" rx="2.6" ry="2.2" fill="#6a6a6a" stroke="#111" stroke-width="0.8"/><ellipse cx="349.1" cy="334.6" rx="2.6" ry="2.2" fill="#6a6a6a" stroke="#111" stroke-width="0.8"/><ellipse cx="355.3" cy="337.2" rx="2.6" ry="2.2" fill="#6a6a6a" stroke="#111" stroke-width="0.8"/><ellipse cx="361.5" cy="339.9" rx="2.6" ry="2.2" fill="#6a6a6a" stroke="#111" stroke-width="0.8"/><line x1="271.7" y1="294.3" x2="391.7" y2="345.9" stroke="#0a0a0a" stroke-width="11.8" stroke-linecap="round" /><line x1="271.7" y1="294.3" x2="391.7" y2="345.9" stroke="#4b4b4b" stroke-width="9.8" stroke-linecap="round" /><line x1="272.3" y1="292.9" x2="392.3" y2="344.5" stroke="#6a6a6a" stroke-width="3.2" stroke-linecap="round" /><line x1="270.4" y1="297.2" x2="390.4" y2="348.8" stroke="#383838" stroke-width="2.8000000000000003" stroke-linecap="round" /><line x1="250.9" y1="305.6" x2="370.9" y2="357.2" stroke="#2a2a2a" stroke-width="4.5" stroke-linecap="butt" /><ellipse cx="251.9" cy="307.4" rx="2.6" ry="2.2" fill="#6a6a6a" stroke="#111" stroke-width="0.8"/><ellipse cx="258.1" cy="310.1" rx="2.6" ry="2.2" fill="#6a6a6a" stroke="#111" stroke-width="0.8"/><ellipse cx="264.3" cy="312.7" rx="2.6" ry="2.2" fill="#6a6a6a" stroke="#111" stroke-width="0.8"/><ellipse cx="270.5" cy="315.4" rx="2.6" ry="2.2" fill="#6a6a6a" stroke="#111" stroke-width="0.8"/><ellipse cx="276.7" cy="318.1" rx="2.6" ry="2.2" fill="#6a6a6a" stroke="#111" stroke-width="0.8"/><ellipse cx="282.9" cy="320.7" rx="2.6" ry="2.2" fill="#6a6a6a" stroke="#111" stroke-width="0.8"/><ellipse cx="289.1" cy="323.4" rx="2.6" ry="2.2" fill="#6a6a6a" stroke="#111" stroke-width="0.8"/><ellipse cx="295.3" cy="326.1" rx="2.6" ry="2.2" fill="#6a6a6a" stroke="#111" stroke-width="0.8"/><ellipse cx="301.5" cy="328.7" rx="2.6" ry="2.2" fill="#6a6a6a" stroke="#111" stroke-width="0.8"/><ellipse cx="307.7" cy="331.4" rx="2.6" ry="2.2" fill="#6a6a6a" stroke="#111" stroke-width="0.8"/><ellipse cx="313.9" cy="334.1" rx="2.6" ry="2.2" fill="#6a6a6a" stroke="#111" stroke-width="0.8"/><ellipse cx="320.1" cy="336.7" rx="2.6" ry="2.2" fill="#6a6a6a" stroke="#111" stroke-width="0.8"/><ellipse cx="326.3" cy="339.4" rx="2.6" ry="2.2" fill="#6a6a6a" stroke="#111" stroke-width="0.8"/><ellipse cx="332.5" cy="342.0" rx="2.6" ry="2.2" fill="#6a6a6a" stroke="#111" stroke-width="0.8"/><ellipse cx="338.7" cy="344.7" rx="2.6" ry="2.2" fill="#6a6a6a" stroke="#111" stroke-width="0.8"/><line x1="248.9" y1="299.1" x2="368.9" y2="350.7" stroke="#0a0a0a" stroke-width="11.8" stroke-linecap="round" /><line x1="248.9" y1="299.1" x2="368.9" y2="350.7" stroke="#4b4b4b" stroke-width="9.8" stroke-linecap="round" /><line x1="249.5" y1="297.7" x2="369.5" y2="349.3" stroke="#6a6a6a" stroke-width="3.2" stroke-linecap="round" /><line x1="247.6" y1="302.0" x2="367.6" y2="353.6" stroke="#383838" stroke-width="2.8000000000000003" stroke-linecap="round" /><line x1="228.1" y1="310.4" x2="348.1" y2="362.0" stroke="#2a2a2a" stroke-width="4.5" stroke-linecap="butt" /><ellipse cx="229.1" cy="312.2" rx="2.6" ry="2.2" fill="#6a6a6a" stroke="#111" stroke-width="0.8"/><ellipse cx="235.3" cy="314.9" rx="2.6" ry="2.2" fill="#6a6a6a" stroke="#111" stroke-width="0.8"/><ellipse cx="241.5" cy="317.5" rx="2.6" ry="2.2" fill="#6a6a6a" stroke="#111" stroke-width="0.8"/><ellipse cx="247.7" cy="320.2" rx="2.6" ry="2.2" fill="#6a6a6a" stroke="#111" stroke-width="0.8"/><ellipse cx="253.9" cy="322.9" rx="2.6" ry="2.2" fill="#6a6a6a" stroke="#111" stroke-width="0.8"/><ellipse cx="260.1" cy="325.5" rx="2.6" ry="2.2" fill="#6a6a6a" stroke="#111" stroke-width="0.8"/><ellipse cx="266.3" cy="328.2" rx="2.6" ry="2.2" fill="#6a6a6a" stroke="#111" stroke-width="0.8"/><ellipse cx="272.5" cy="330.9" rx="2.6" ry="2.2" fill="#6a6a6a" stroke="#111" stroke-width="0.8"/><ellipse cx="278.7" cy="333.5" rx="2.6" ry="2.2" fill="#6a6a6a" stroke="#111" stroke-width="0.8"/><ellipse cx="284.9" cy="336.2" rx="2.6" ry="2.2" fill="#6a6a6a" stroke="#111" stroke-width="0.8"/><ellipse cx="291.1" cy="338.8" rx="2.6" ry="2.2" fill="#6a6a6a" stroke="#111" stroke-width="0.8"/><ellipse cx="297.3" cy="341.5" rx="2.6" ry="2.2" fill="#6a6a6a" stroke="#111" stroke-width="0.8"/><ellipse cx="303.5" cy="344.2" rx="2.6" ry="2.2" fill="#6a6a6a" stroke="#111" stroke-width="0.8"/><ellipse cx="309.7" cy="346.8" rx="2.6" ry="2.2" fill="#6a6a6a" stroke="#111" stroke-width="0.8"/><ellipse cx="315.9" cy="349.5" rx="2.6" ry="2.2" fill="#6a6a6a" stroke="#111" stroke-width="0.8"/><line x1="226.1" y1="303.9" x2="346.1" y2="355.5" stroke="#0a0a0a" stroke-width="11.8" stroke-linecap="round" /><line x1="226.1" y1="303.9" x2="346.1" y2="355.5" stroke="#4b4b4b" stroke-width="9.8" stroke-linecap="round" /><line x1="226.7" y1="302.5" x2="346.7" y2="354.1" stroke="#6a6a6a" stroke-width="3.2" stroke-linecap="round" /><line x1="224.8" y1="306.8" x2="344.8" y2="358.4" stroke="#383838" stroke-width="2.8000000000000003" stroke-linecap="round" /><line x1="205.3" y1="315.2" x2="325.3" y2="366.8" stroke="#2a2a2a" stroke-width="4.5" stroke-linecap="butt" /><ellipse cx="206.3" cy="317.0" rx="2.6" ry="2.2" fill="#6a6a6a" stroke="#111" stroke-width="0.8"/><ellipse cx="212.5" cy="319.7" rx="2.6" ry="2.2" fill="#6a6a6a" stroke="#111" stroke-width="0.8"/><ellipse cx="218.7" cy="322.3" rx="2.6" ry="2.2" fill="#6a6a6a" stroke="#111" stroke-width="0.8"/><ellipse cx="224.9" cy="325.0" rx="2.6" ry="2.2" fill="#6a6a6a" stroke="#111" stroke-width="0.8"/><ellipse cx="231.1" cy="327.7" rx="2.6" ry="2.2" fill="#6a6a6a" stroke="#111" stroke-width="0.8"/><ellipse cx="237.3" cy="330.3" rx="2.6" ry="2.2" fill="#6a6a6a" stroke="#111" stroke-width="0.8"/><ellipse cx="243.5" cy="333.0" rx="2.6" ry="2.2" fill="#6a6a6a" stroke="#111" stroke-width="0.8"/><ellipse cx="249.7" cy="335.7" rx="2.6" ry="2.2" fill="#6a6a6a" stroke="#111" stroke-width="0.8"/><ellipse cx="255.9" cy="338.3" rx="2.6" ry="2.2" fill="#6a6a6a" stroke="#111" stroke-width="0.8"/><ellipse cx="262.1" cy="341.0" rx="2.6" ry="2.2" fill="#6a6a6a" stroke="#111" stroke-width="0.8"/><ellipse cx="268.3" cy="343.6" rx="2.6" ry="2.2" fill="#6a6a6a" stroke="#111" stroke-width="0.8"/><ellipse cx="274.5" cy="346.3" rx="2.6" ry="2.2" fill="#6a6a6a" stroke="#111" stroke-width="0.8"/><ellipse cx="280.7" cy="349.0" rx="2.6" ry="2.2" fill="#6a6a6a" stroke="#111" stroke-width="0.8"/><ellipse cx="286.9" cy="351.6" rx="2.6" ry="2.2" fill="#6a6a6a" stroke="#111" stroke-width="0.8"/><ellipse cx="293.1" cy="354.3" rx="2.6" ry="2.2" fill="#6a6a6a" stroke="#111" stroke-width="0.8"/><line x1="203.3" y1="308.7" x2="323.3" y2="360.3" stroke="#0a0a0a" stroke-width="11.8" stroke-linecap="round" /><line x1="203.3" y1="308.7" x2="323.3" y2="360.3" stroke="#4b4b4b" stroke-width="9.8" stroke-linecap="round" /><line x1="203.9" y1="307.3" x2="323.9" y2="358.9" stroke="#6a6a6a" stroke-width="3.2" stroke-linecap="round" /><line x1="202.0" y1="311.6" x2="322.0" y2="363.2" stroke="#383838" stroke-width="2.8000000000000003" stroke-linecap="round" /><line x1="182.5" y1="320.0" x2="302.5" y2="371.6" stroke="#2a2a2a" stroke-width="4.5" stroke-linecap="butt" /><ellipse cx="183.5" cy="321.8" rx="2.6" ry="2.2" fill="#6a6a6a" stroke="#111" stroke-width="0.8"/><ellipse cx="189.7" cy="324.5" rx="2.6" ry="2.2" fill="#6a6a6a" stroke="#111" stroke-width="0.8"/><ellipse cx="195.9" cy="327.1" rx="2.6" ry="2.2" fill="#6a6a6a" stroke="#111" stroke-width="0.8"/><ellipse cx="202.1" cy="329.8" rx="2.6" ry="2.2" fill="#6a6a6a" stroke="#111" stroke-width="0.8"/><ellipse cx="208.3" cy="332.5" rx="2.6" ry="2.2" fill="#6a6a6a" stroke="#111" stroke-width="0.8"/><ellipse cx="214.5" cy="335.1" rx="2.6" ry="2.2" fill="#6a6a6a" stroke="#111" stroke-width="0.8"/><ellipse cx="220.7" cy="337.8" rx="2.6" ry="2.2" fill="#6a6a6a" stroke="#111" stroke-width="0.8"/><ellipse cx="226.9" cy="340.5" rx="2.6" ry="2.2" fill="#6a6a6a" stroke="#111" stroke-width="0.8"/><ellipse cx="233.1" cy="343.1" rx="2.6" ry="2.2" fill="#6a6a6a" stroke="#111" stroke-width="0.8"/><ellipse cx="239.3" cy="345.8" rx="2.6" ry="2.2" fill="#6a6a6a" stroke="#111" stroke-width="0.8"/><ellipse cx="245.5" cy="348.4" rx="2.6" ry="2.2" fill="#6a6a6a" stroke="#111" stroke-width="0.8"/><ellipse cx="251.7" cy="351.1" rx="2.6" ry="2.2" fill="#6a6a6a" stroke="#111" stroke-width="0.8"/><ellipse cx="257.9" cy="353.8" rx="2.6" ry="2.2" fill="#6a6a6a" stroke="#111" stroke-width="0.8"/><ellipse cx="264.1" cy="356.4" rx="2.6" ry="2.2" fill="#6a6a6a" stroke="#111" stroke-width="0.8"/><ellipse cx="270.3" cy="359.1" rx="2.6" ry="2.2" fill="#6a6a6a" stroke="#111" stroke-width="0.8"/><line x1="180.5" y1="313.5" x2="300.5" y2="365.1" stroke="#0a0a0a" stroke-width="11.8" stroke-linecap="round" /><line x1="180.5" y1="313.5" x2="300.5" y2="365.1" stroke="#4b4b4b" stroke-width="9.8" stroke-linecap="round" /><line x1="181.1" y1="312.1" x2="301.1" y2="363.7" stroke="#6a6a6a" stroke-width="3.2" stroke-linecap="round" /><line x1="179.2" y1="316.4" x2="299.2" y2="368.0" stroke="#383838" stroke-width="2.8000000000000003" stroke-linecap="round" /><polygon points="764.0,332.0 899.0,318.0 899.0,700.0 792.0,724.0 764.0,718.0" fill="#2d2d2d" stroke="#000" stroke-width="1" stroke-linejoin="round" /><line x1="770.0" y1="330.0" x2="770.0" y2="712.0" stroke="#050505" stroke-width="1.4" stroke-linecap="butt" /><line x1="777.5" y1="330.0" x2="777.5" y2="710.4" stroke="#050505" stroke-width="1.4" stroke-linecap="butt" /><line x1="778.8" y1="332.0" x2="778.8" y2="708.4" stroke="#8c8c8c" stroke-width="0.9" stroke-linecap="butt" /><line x1="785.0" y1="330.0" x2="785.0" y2="708.7" stroke="#050505" stroke-width="1.4" stroke-linecap="butt" /><line x1="792.5" y1="330.0" x2="792.5" y2="707.0" stroke="#050505" stroke-width="1.4" stroke-linecap="butt" /><line x1="793.8" y1="332.0" x2="793.8" y2="705.0" stroke="#8c8c8c" stroke-width="0.9" stroke-linecap="butt" /><line x1="800.0" y1="330.0" x2="800.0" y2="705.4" stroke="#050505" stroke-width="1.4" stroke-linecap="butt" /><line x1="807.5" y1="330.0" x2="807.5" y2="703.8" stroke="#050505" stroke-width="1.4" stroke-linecap="butt" /><line x1="808.8" y1="332.0" x2="808.8" y2="701.8" stroke="#8c8c8c" stroke-width="0.9" stroke-linecap="butt" /><line x1="815.0" y1="330.0" x2="815.0" y2="702.1" stroke="#050505" stroke-width="1.4" stroke-linecap="butt" /><line x1="822.5" y1="330.0" x2="822.5" y2="700.5" stroke="#050505" stroke-width="1.4" stroke-linecap="butt" /><line x1="823.8" y1="332.0" x2="823.8" y2="698.5" stroke="#8c8c8c" stroke-width="0.9" stroke-linecap="butt" /><line x1="830.0" y1="330.0" x2="830.0" y2="698.8" stroke="#050505" stroke-width="1.4" stroke-linecap="butt" /><line x1="837.5" y1="330.0" x2="837.5" y2="697.1" stroke="#050505" stroke-width="1.4" stroke-linecap="butt" /><line x1="838.8" y1="332.0" x2="838.8" y2="695.1" stroke="#8c8c8c" stroke-width="0.9" stroke-linecap="butt" /><line x1="845.0" y1="330.0" x2="845.0" y2="695.5" stroke="#050505" stroke-width="1.4" stroke-linecap="butt" /><line x1="852.5" y1="330.0" x2="852.5" y2="693.9" stroke="#050505" stroke-width="1.4" stroke-linecap="butt" /><line x1="853.8" y1="332.0" x2="853.8" y2="691.9" stroke="#8c8c8c" stroke-width="0.9" stroke-linecap="butt" /><line x1="860.0" y1="330.0" x2="860.0" y2="692.2" stroke="#050505" stroke-width="1.4" stroke-linecap="butt" /><line x1="867.5" y1="330.0" x2="867.5" y2="690.5" stroke="#050505" stroke-width="1.4" stroke-linecap="butt" /><line x1="868.8" y1="332.0" x2="868.8" y2="688.5" stroke="#8c8c8c" stroke-width="0.9" stroke-linecap="butt" /><line x1="875.0" y1="330.0" x2="875.0" y2="688.9" stroke="#050505" stroke-width="1.4" stroke-linecap="butt" /><line x1="882.5" y1="330.0" x2="882.5" y2="687.2" stroke="#050505" stroke-width="1.4" stroke-linecap="butt" /><line x1="883.8" y1="332.0" x2="883.8" y2="685.2" stroke="#8c8c8c" stroke-width="0.9" stroke-linecap="butt" /><line x1="890.0" y1="330.0" x2="890.0" y2="685.6" stroke="#050505" stroke-width="1.4" stroke-linecap="butt" /><line x1="897.5" y1="330.0" x2="897.5" y2="684.0" stroke="#050505" stroke-width="1.4" stroke-linecap="butt" /><line x1="898.8" y1="332.0" x2="898.8" y2="682.0" stroke="#8c8c8c" stroke-width="0.9" stroke-linecap="butt" /><path d="M787.0,698.0 L789.2,716.0 M793.0,698.0 L790.8,716.0" fill="none" stroke="#000" stroke-width="1.5" /><path d="M787.0,698.0 L789.2,714.0 M793.0,698.0 L790.8,714.0" fill="none" stroke="#8a8a8a" stroke-width="0.8" stroke-dasharray="3,2"/><path d="M793.5,696.6025 L795.7,714.6025 M799.5,696.6025 L797.3,714.6025" fill="none" stroke="#000" stroke-width="1.5" /><path d="M793.5,696.6025 L795.7,712.6025 M799.5,696.6025 L797.3,712.6025" fill="none" stroke="#8a8a8a" stroke-width="0.8" stroke-dasharray="3,2"/><path d="M800.0,695.205 L802.2,713.205 M806.0,695.205 L803.8,713.205" fill="none" stroke="#000" stroke-width="1.5" /><path d="M800.0,695.205 L802.2,711.205 M806.0,695.205 L803.8,711.205" fill="none" stroke="#8a8a8a" stroke-width="0.8" stroke-dasharray="3,2"/><path d="M806.5,693.8075 L808.7,711.8075 M812.5,693.8075 L810.3,711.8075" fill="none" stroke="#000" stroke-width="1.5" /><path d="M806.5,693.8075 L808.7,709.8075 M812.5,693.8075 L810.3,709.8075" fill="none" stroke="#8a8a8a" stroke-width="0.8" stroke-dasharray="3,2"/><path d="M813.0,692.41 L815.2,710.41 M819.0,692.41 L816.8,710.41" fill="none" stroke="#000" stroke-width="1.5" /><path d="M813.0,692.41 L815.2,708.41 M819.0,692.41 L816.8,708.41" fill="none" stroke="#8a8a8a" stroke-width="0.8" stroke-dasharray="3,2"/><path d="M819.5,691.0125 L821.7,709.0125 M825.5,691.0125 L823.3,709.0125" fill="none" stroke="#000" stroke-width="1.5" /><path d="M819.5,691.0125 L821.7,707.0125 M825.5,691.0125 L823.3,707.0125" fill="none" stroke="#8a8a8a" stroke-width="0.8" stroke-dasharray="3,2"/><path d="M826.0,689.615 L828.2,707.615 M832.0,689.615 L829.8,707.615" fill="none" stroke="#000" stroke-width="1.5" /><path d="M826.0,689.615 L828.2,705.615 M832.0,689.615 L829.8,705.615" fill="none" stroke="#8a8a8a" stroke-width="0.8" stroke-dasharray="3,2"/><path d="M832.5,688.2175 L834.7,706.2175 M838.5,688.2175 L836.3,706.2175" fill="none" stroke="#000" stroke-width="1.5" /><path d="M832.5,688.2175 L834.7,704.2175 M838.5,688.2175 L836.3,704.2175" fill="none" stroke="#8a8a8a" stroke-width="0.8" stroke-dasharray="3,2"/><path d="M839.0,686.82 L841.2,704.82 M845.0,686.82 L842.8,704.82" fill="none" stroke="#000" stroke-width="1.5" /><path d="M839.0,686.82 L841.2,702.82 M845.0,686.82 L842.8,702.82" fill="none" stroke="#8a8a8a" stroke-width="0.8" stroke-dasharray="3,2"/><path d="M845.5,685.4225 L847.7,703.4225 M851.5,685.4225 L849.3,703.4225" fill="none" stroke="#000" stroke-width="1.5" /><path d="M845.5,685.4225 L847.7,701.4225 M851.5,685.4225 L849.3,701.4225" fill="none" stroke="#8a8a8a" stroke-width="0.8" stroke-dasharray="3,2"/><path d="M852.0,684.025 L854.2,702.025 M858.0,684.025 L855.8,702.025" fill="none" stroke="#000" stroke-width="1.5" /><path d="M852.0,684.025 L854.2,700.025 M858.0,684.025 L855.8,700.025" fill="none" stroke="#8a8a8a" stroke-width="0.8" stroke-dasharray="3,2"/><path d="M858.5,682.6275 L860.7,700.6275 M864.5,682.6275 L862.3,700.6275" fill="none" stroke="#000" stroke-width="1.5" /><path d="M858.5,682.6275 L860.7,698.6275 M864.5,682.6275 L862.3,698.6275" fill="none" stroke="#8a8a8a" stroke-width="0.8" stroke-dasharray="3,2"/><path d="M865.0,681.23 L867.2,699.23 M871.0,681.23 L868.8,699.23" fill="none" stroke="#000" stroke-width="1.5" /><path d="M865.0,681.23 L867.2,697.23 M871.0,681.23 L868.8,697.23" fill="none" stroke="#8a8a8a" stroke-width="0.8" stroke-dasharray="3,2"/><path d="M871.5,679.8325 L873.7,697.8325 M877.5,679.8325 L875.3,697.8325" fill="none" stroke="#000" stroke-width="1.5" /><path d="M871.5,679.8325 L873.7,695.8325 M877.5,679.8325 L875.3,695.8325" fill="none" stroke="#8a8a8a" stroke-width="0.8" stroke-dasharray="3,2"/><path d="M878.0,678.435 L880.2,696.435 M884.0,678.435 L881.8,696.435" fill="none" stroke="#000" stroke-width="1.5" /><path d="M878.0,678.435 L880.2,694.435 M884.0,678.435 L881.8,694.435" fill="none" stroke="#8a8a8a" stroke-width="0.8" stroke-dasharray="3,2"/><path d="M884.5,677.0375 L886.7,695.0375 M890.5,677.0375 L888.3,695.0375" fill="none" stroke="#000" stroke-width="1.5" /><path d="M884.5,677.0375 L886.7,693.0375 M890.5,677.0375 L888.3,693.0375" fill="none" stroke="#8a8a8a" stroke-width="0.8" stroke-dasharray="3,2"/><path d="M891.0,675.64 L893.2,693.64 M897.0,675.64 L894.8,693.64" fill="none" stroke="#000" stroke-width="1.5" /><path d="M891.0,675.64 L893.2,691.64 M897.0,675.64 L894.8,691.64" fill="none" stroke="#8a8a8a" stroke-width="0.8" stroke-dasharray="3,2"/><line x1="797.0" y1="729.0" x2="897.0" y2="708.0" stroke="#0a0a0a" stroke-width="9.3" stroke-linecap="round" /><line x1="797.0" y1="729.0" x2="897.0" y2="708.0" stroke="#878787" stroke-width="7.3" stroke-linecap="round" /><line x1="796.8" y1="727.9" x2="896.8" y2="706.9" stroke="#a4a4a4" stroke-width="2.4" stroke-linecap="round" /><line x1="797.5" y1="731.3" x2="897.5" y2="710.3" stroke="#6c6c6c" stroke-width="2.1" stroke-linecap="round" /><rect x="798.0" y="719.4" width="4" height="4" fill="#8a8a8a" stroke="#111" stroke-width="0.7"/><rect x="804.3" y="718.0" width="4" height="4" fill="#8a8a8a" stroke="#111" stroke-width="0.7"/><rect x="810.6" y="716.7" width="4" height="4" fill="#8a8a8a" stroke="#111" stroke-width="0.7"/><rect x="816.9" y="715.4" width="4" height="4" fill="#8a8a8a" stroke="#111" stroke-width="0.7"/><rect x="823.2" y="714.1" width="4" height="4" fill="#8a8a8a" stroke="#111" stroke-width="0.7"/><rect x="829.5" y="712.8" width="4" height="4" fill="#8a8a8a" stroke="#111" stroke-width="0.7"/><rect x="835.8" y="711.4" width="4" height="4" fill="#8a8a8a" stroke="#111" stroke-width="0.7"/><rect x="842.1" y="710.1" width="4" height="4" fill="#8a8a8a" stroke="#111" stroke-width="0.7"/><rect x="848.4" y="708.8" width="4" height="4" fill="#8a8a8a" stroke="#111" stroke-width="0.7"/><rect x="854.7" y="707.5" width="4" height="4" fill="#8a8a8a" stroke="#111" stroke-width="0.7"/><rect x="861.0" y="706.1" width="4" height="4" fill="#8a8a8a" stroke="#111" stroke-width="0.7"/><rect x="867.3" y="704.8" width="4" height="4" fill="#8a8a8a" stroke="#111" stroke-width="0.7"/><rect x="873.6" y="703.5" width="4" height="4" fill="#8a8a8a" stroke="#111" stroke-width="0.7"/><rect x="879.9" y="702.2" width="4" height="4" fill="#8a8a8a" stroke="#111" stroke-width="0.7"/><rect x="886.2" y="700.8" width="4" height="4" fill="#8a8a8a" stroke="#111" stroke-width="0.7"/><rect x="892.5" y="699.5" width="4" height="4" fill="#8a8a8a" stroke="#111" stroke-width="0.7"/><polygon points="762.0,716.0 779.0,716.0 796.0,745.0 796.0,774.0 762.0,777.0" fill="#555" stroke="#000" stroke-width="1" stroke-linejoin="round" /><polygon points="760.0,765.0 797.0,760.0 797.0,775.0 762.0,778.0" fill="#606060" stroke="#000" stroke-width="1" stroke-linejoin="round" /><circle cx="780" cy="761" r="3" fill="#eee" stroke="#000" stroke-width="0.8"/><line x1="763.7" y1="257.8" x2="643.7" y2="280.0" stroke="#0a0a0a" stroke-width="10.8" stroke-linecap="round" /><line x1="763.7" y1="257.8" x2="643.7" y2="280.0" stroke="#878787" stroke-width="8.8" stroke-linecap="round" /><line x1="763.5" y1="256.5" x2="643.5" y2="278.7" stroke="#a4a4a4" stroke-width="2.88" stroke-linecap="round" /><line x1="764.2" y1="260.6" x2="644.2" y2="282.8" stroke="#6c6c6c" stroke-width="2.5200000000000005" stroke-linecap="round" /><line x1="780.1" y1="264.4" x2="660.1" y2="286.6" stroke="#0a0a0a" stroke-width="10.8" stroke-linecap="round" /><line x1="780.1" y1="264.4" x2="660.1" y2="286.6" stroke="#878787" stroke-width="8.8" stroke-linecap="round" /><line x1="779.9" y1="263.1" x2="659.9" y2="285.3" stroke="#a4a4a4" stroke-width="2.88" stroke-linecap="round" /><line x1="780.6" y1="267.3" x2="660.6" y2="289.5" stroke="#6c6c6c" stroke-width="2.5200000000000005" stroke-linecap="round" /><line x1="796.5" y1="271.1" x2="676.5" y2="293.3" stroke="#0a0a0a" stroke-width="10.8" stroke-linecap="round" /><line x1="796.5" y1="271.1" x2="676.5" y2="293.3" stroke="#878787" stroke-width="8.8" stroke-linecap="round" /><line x1="796.3" y1="269.8" x2="676.3" y2="292.0" stroke="#a4a4a4" stroke-width="2.88" stroke-linecap="round" /><line x1="797.0" y1="273.9" x2="677.0" y2="296.1" stroke="#6c6c6c" stroke-width="2.5200000000000005" stroke-linecap="round" /><line x1="812.9" y1="277.8" x2="692.9" y2="299.9" stroke="#0a0a0a" stroke-width="10.8" stroke-linecap="round" /><line x1="812.9" y1="277.8" x2="692.9" y2="299.9" stroke="#878787" stroke-width="8.8" stroke-linecap="round" /><line x1="812.7" y1="276.4" x2="692.7" y2="298.6" stroke="#a4a4a4" stroke-width="2.88" stroke-linecap="round" /><line x1="813.4" y1="280.6" x2="693.4" y2="302.8" stroke="#6c6c6c" stroke-width="2.5200000000000005" stroke-linecap="round" /><line x1="829.3" y1="284.4" x2="709.3" y2="306.6" stroke="#0a0a0a" stroke-width="10.8" stroke-linecap="round" /><line x1="829.3" y1="284.4" x2="709.3" y2="306.6" stroke="#878787" stroke-width="8.8" stroke-linecap="round" /><line x1="829.1" y1="283.1" x2="709.1" y2="305.3" stroke="#a4a4a4" stroke-width="2.88" stroke-linecap="round" /><line x1="829.8" y1="287.2" x2="709.8" y2="309.4" stroke="#6c6c6c" stroke-width="2.5200000000000005" stroke-linecap="round" /><line x1="845.7" y1="291.1" x2="725.7" y2="313.2" stroke="#0a0a0a" stroke-width="10.8" stroke-linecap="round" /><line x1="845.7" y1="291.1" x2="725.7" y2="313.2" stroke="#878787" stroke-width="8.8" stroke-linecap="round" /><line x1="845.5" y1="289.7" x2="725.5" y2="311.9" stroke="#a4a4a4" stroke-width="2.88" stroke-linecap="round" /><line x1="846.2" y1="293.9" x2="726.2" y2="316.1" stroke="#6c6c6c" stroke-width="2.5200000000000005" stroke-linecap="round" /><line x1="862.1" y1="297.7" x2="742.1" y2="319.9" stroke="#0a0a0a" stroke-width="10.8" stroke-linecap="round" /><line x1="862.1" y1="297.7" x2="742.1" y2="319.9" stroke="#878787" stroke-width="8.8" stroke-linecap="round" /><line x1="861.9" y1="296.4" x2="741.9" y2="318.6" stroke="#a4a4a4" stroke-width="2.88" stroke-linecap="round" /><line x1="862.6" y1="300.5" x2="742.6" y2="322.7" stroke="#6c6c6c" stroke-width="2.5200000000000005" stroke-linecap="round" /><line x1="878.5" y1="304.4" x2="758.5" y2="326.6" stroke="#0a0a0a" stroke-width="10.8" stroke-linecap="round" /><line x1="878.5" y1="304.4" x2="758.5" y2="326.6" stroke="#878787" stroke-width="8.8" stroke-linecap="round" /><line x1="878.3" y1="303.0" x2="758.3" y2="325.2" stroke="#a4a4a4" stroke-width="2.88" stroke-linecap="round" /><line x1="879.0" y1="307.2" x2="759.0" y2="329.4" stroke="#6c6c6c" stroke-width="2.5200000000000005" stroke-linecap="round" /><line x1="894.9" y1="311.0" x2="774.9" y2="333.2" stroke="#0a0a0a" stroke-width="10.8" stroke-linecap="round" /><line x1="894.9" y1="311.0" x2="774.9" y2="333.2" stroke="#878787" stroke-width="8.8" stroke-linecap="round" /><line x1="894.7" y1="309.7" x2="774.7" y2="331.9" stroke="#a4a4a4" stroke-width="2.88" stroke-linecap="round" /><line x1="895.4" y1="313.8" x2="775.4" y2="336.0" stroke="#6c6c6c" stroke-width="2.5200000000000005" stroke-linecap="round" /><path d="M799.0,343.0 L797.0,367.0 M801.0,343.0 L803.0,367.0" fill="none" stroke="#000" stroke-width="1.5" /><path d="M799.0,345.0 L797.0,367.0 M801.0,345.0 L803.0,367.0" fill="none" stroke="#8a8a8a" stroke-width="0.8" stroke-dasharray="3,2"/><rect x="797.0" y="341.0" width="6" height="5" rx="1.5" fill="#6a6a6a" stroke="#111" stroke-width="0.8"/><path d="M806.5,341.5 L804.5,365.5 M808.5,341.5 L810.5,365.5" fill="none" stroke="#000" stroke-width="1.5" /><path d="M806.5,343.5 L804.5,365.5 M808.5,343.5 L810.5,365.5" fill="none" stroke="#8a8a8a" stroke-width="0.8" stroke-dasharray="3,2"/><rect x="804.5" y="339.5" width="6" height="5" rx="1.5" fill="#6a6a6a" stroke="#111" stroke-width="0.8"/><path d="M814.0,340.0 L812.0,364.0 M816.0,340.0 L818.0,364.0" fill="none" stroke="#000" stroke-width="1.5" /><path d="M814.0,342.0 L812.0,364.0 M816.0,342.0 L818.0,364.0" fill="none" stroke="#8a8a8a" stroke-width="0.8" stroke-dasharray="3,2"/><rect x="812.0" y="338.0" width="6" height="5" rx="1.5" fill="#6a6a6a" stroke="#111" stroke-width="0.8"/><path d="M821.5,338.5 L819.5,362.5 M823.5,338.5 L825.5,362.5" fill="none" stroke="#000" stroke-width="1.5" /><path d="M821.5,340.5 L819.5,362.5 M823.5,340.5 L825.5,362.5" fill="none" stroke="#8a8a8a" stroke-width="0.8" stroke-dasharray="3,2"/><rect x="819.5" y="336.5" width="6" height="5" rx="1.5" fill="#6a6a6a" stroke="#111" stroke-width="0.8"/><path d="M829.0,337.0 L827.0,361.0 M831.0,337.0 L833.0,361.0" fill="none" stroke="#000" stroke-width="1.5" /><path d="M829.0,339.0 L827.0,361.0 M831.0,339.0 L833.0,361.0" fill="none" stroke="#8a8a8a" stroke-width="0.8" stroke-dasharray="3,2"/><rect x="827.0" y="335.0" width="6" height="5" rx="1.5" fill="#6a6a6a" stroke="#111" stroke-width="0.8"/><path d="M836.5,335.5 L834.5,359.5 M838.5,335.5 L840.5,359.5" fill="none" stroke="#000" stroke-width="1.5" /><path d="M836.5,337.5 L834.5,359.5 M838.5,337.5 L840.5,359.5" fill="none" stroke="#8a8a8a" stroke-width="0.8" stroke-dasharray="3,2"/><rect x="834.5" y="333.5" width="6" height="5" rx="1.5" fill="#6a6a6a" stroke="#111" stroke-width="0.8"/><path d="M844.0,334.0 L842.0,358.0 M846.0,334.0 L848.0,358.0" fill="none" stroke="#000" stroke-width="1.5" /><path d="M844.0,336.0 L842.0,358.0 M846.0,336.0 L848.0,358.0" fill="none" stroke="#8a8a8a" stroke-width="0.8" stroke-dasharray="3,2"/><rect x="842.0" y="332.0" width="6" height="5" rx="1.5" fill="#6a6a6a" stroke="#111" stroke-width="0.8"/><path d="M851.5,332.5 L849.5,356.5 M853.5,332.5 L855.5,356.5" fill="none" stroke="#000" stroke-width="1.5" /><path d="M851.5,334.5 L849.5,356.5 M853.5,334.5 L855.5,356.5" fill="none" stroke="#8a8a8a" stroke-width="0.8" stroke-dasharray="3,2"/><rect x="849.5" y="330.5" width="6" height="5" rx="1.5" fill="#6a6a6a" stroke="#111" stroke-width="0.8"/><path d="M859.0,331.0 L857.0,355.0 M861.0,331.0 L863.0,355.0" fill="none" stroke="#000" stroke-width="1.5" /><path d="M859.0,333.0 L857.0,355.0 M861.0,333.0 L863.0,355.0" fill="none" stroke="#8a8a8a" stroke-width="0.8" stroke-dasharray="3,2"/><rect x="857.0" y="329.0" width="6" height="5" rx="1.5" fill="#6a6a6a" stroke="#111" stroke-width="0.8"/><path d="M866.5,329.5 L864.5,353.5 M868.5,329.5 L870.5,353.5" fill="none" stroke="#000" stroke-width="1.5" /><path d="M866.5,331.5 L864.5,353.5 M868.5,331.5 L870.5,353.5" fill="none" stroke="#8a8a8a" stroke-width="0.8" stroke-dasharray="3,2"/><rect x="864.5" y="327.5" width="6" height="5" rx="1.5" fill="#6a6a6a" stroke="#111" stroke-width="0.8"/><path d="M874.0,328.0 L872.0,352.0 M876.0,328.0 L878.0,352.0" fill="none" stroke="#000" stroke-width="1.5" /><path d="M874.0,330.0 L872.0,352.0 M876.0,330.0 L878.0,352.0" fill="none" stroke="#8a8a8a" stroke-width="0.8" stroke-dasharray="3,2"/><rect x="872.0" y="326.0" width="6" height="5" rx="1.5" fill="#6a6a6a" stroke="#111" stroke-width="0.8"/><path d="M881.5,326.5 L879.5,350.5 M883.5,326.5 L885.5,350.5" fill="none" stroke="#000" stroke-width="1.5" /><path d="M881.5,328.5 L879.5,350.5 M883.5,328.5 L885.5,350.5" fill="none" stroke="#8a8a8a" stroke-width="0.8" stroke-dasharray="3,2"/><rect x="879.5" y="324.5" width="6" height="5" rx="1.5" fill="#6a6a6a" stroke="#111" stroke-width="0.8"/><path d="M889.0,325.0 L887.0,349.0 M891.0,325.0 L893.0,349.0" fill="none" stroke="#000" stroke-width="1.5" /><path d="M889.0,327.0 L887.0,349.0 M891.0,327.0 L893.0,349.0" fill="none" stroke="#8a8a8a" stroke-width="0.8" stroke-dasharray="3,2"/><rect x="887.0" y="323.0" width="6" height="5" rx="1.5" fill="#6a6a6a" stroke="#111" stroke-width="0.8"/><path d="M896.5,323.5 L894.5,347.5 M898.5,323.5 L900.5,347.5" fill="none" stroke="#000" stroke-width="1.5" /><path d="M896.5,325.5 L894.5,347.5 M898.5,325.5 L900.5,347.5" fill="none" stroke="#8a8a8a" stroke-width="0.8" stroke-dasharray="3,2"/><rect x="894.5" y="321.5" width="6" height="5" rx="1.5" fill="#6a6a6a" stroke="#111" stroke-width="0.8"/><polygon points="262.0,331.0 429.0,395.0 430.0,848.0 413.0,844.0 262.0,780.0" fill="#2d2d2d" stroke="#000" stroke-width="1" stroke-linejoin="round" /><polygon points="430.0,395.5 765.0,323.5 765.0,778.0 430.0,848.0" fill="#7f7f7f" stroke="#000" stroke-width="1.2" stroke-linejoin="round" /><polygon points="429.5,526.0 770.6,456.0 770.6,528.6 437.0,590.5 429.5,590.0" fill="#7f7f7f" stroke="#000" stroke-width="1" stroke-linejoin="round" /><polygon points="429.5,526.0 437.0,528.0 437.0,590.5 429.5,590.0" fill="#2d2d2d" stroke="#000" stroke-width="1" stroke-linejoin="round" /><line x1="437.0" y1="530.0" x2="770.0" y2="460.0" stroke="#a9a9a9" stroke-width="2.2" stroke-linecap="butt" /><polygon points="429.5,649.5 770.6,579.6 770.6,646.8 437.0,714.5 429.5,714.0" fill="#7f7f7f" stroke="#000" stroke-width="1" stroke-linejoin="round" /><polygon points="429.5,649.5 437.0,651.5 437.0,714.5 429.5,714.0" fill="#2d2d2d" stroke="#000" stroke-width="1" stroke-linejoin="round" /><line x1="437.0" y1="653.5" x2="770.0" y2="583.6" stroke="#a9a9a9" stroke-width="2.2" stroke-linecap="butt" /><polygon points="730.5,471.6 767.2,462.5 785.0,469.6 747.6,477.8" fill="#8f8f8f" stroke="#000" stroke-width="1" stroke-linejoin="round" /><polygon points="730.5,471.6 747.6,477.8 747.6,530.5 730.5,524.7" fill="#2d2d2d" stroke="#000" stroke-width="1" stroke-linejoin="round" /><polygon points="747.6,477.8 785.0,469.6 785.0,523.0 747.6,530.5" fill="#7f7f7f" stroke="#000" stroke-width="1" stroke-linejoin="round" /><polygon points="764.5,385.0 775.3,387.0 775.3,410.0 764.5,410.0" fill="#8a8a8a" stroke="#000" stroke-width="1" stroke-linejoin="round" /><polygon points="764.5,535.0 775.3,537.0 775.3,560.0 764.5,560.0" fill="#8a8a8a" stroke="#000" stroke-width="1" stroke-linejoin="round" /><polygon points="764.5,680.0 775.3,682.0 775.3,705.0 764.5,705.0" fill="#8a8a8a" stroke="#000" stroke-width="1" stroke-linejoin="round" /><polygon points="402.0,456.6 418.0,460.6 418.0,483.6 402.0,479.6" fill="#2b2b2b" stroke="#000" stroke-width="1" stroke-linejoin="round" /><polygon points="402.0,450.6 428.0,458.6 428.0,463.6 418.0,460.6 402.0,456.6" fill="url(#gt)" stroke="#000" stroke-width="0.9" stroke-linejoin="round" /><polygon points="418.0,460.6 428.0,463.6 428.0,485.6 418.0,483.6" fill="#8a8a8a" stroke="#000" stroke-width="1" stroke-linejoin="round" /><polygon points="402.0,606.0 418.0,610.0 418.0,633.0 402.0,629.0" fill="#2b2b2b" stroke="#000" stroke-width="1" stroke-linejoin="round" /><polygon points="402.0,600.0 428.0,608.0 428.0,613.0 418.0,610.0 402.0,606.0" fill="url(#gt)" stroke="#000" stroke-width="0.9" stroke-linejoin="round" /><polygon points="418.0,610.0 428.0,613.0 428.0,635.0 418.0,633.0" fill="#8a8a8a" stroke="#000" stroke-width="1" stroke-linejoin="round" /><polygon points="402.0,751.0 418.0,755.0 418.0,778.0 402.0,774.0" fill="#2b2b2b" stroke="#000" stroke-width="1" stroke-linejoin="round" /><polygon points="402.0,745.0 428.0,753.0 428.0,758.0 418.0,755.0 402.0,751.0" fill="url(#gt)" stroke="#000" stroke-width="0.9" stroke-linejoin="round" /><polygon points="418.0,755.0 428.0,758.0 428.0,780.0 418.0,778.0" fill="#8a8a8a" stroke="#000" stroke-width="1" stroke-linejoin="round" /><polygon points="260.0,326.0 428.0,390.0 779.0,314.5 781.0,320.0 429.0,395.5 261.0,331.0" fill="#909090" stroke="#000" stroke-width="1" stroke-linejoin="round" /><polygon points="261.0,326.0 428.0,390.0 779.0,314.5 608.0,250.0" fill="#8b8b8b" stroke="#000" stroke-width="1.1" stroke-linejoin="round" /><line x1="275.0" y1="327.0" x2="608.0" y2="253.0" stroke="#000" stroke-width="0.8" stroke-linecap="butt" /><line x1="608.0" y1="253.0" x2="766.0" y2="318.0" stroke="#000" stroke-width="0.8" stroke-linecap="butt" /><path d="M243,330 L252,327 L259,329 L268,327 L275,331 L275,361 L243,363 Z" fill="#555" stroke="#000" stroke-width="1" /><ellipse cx="258" cy="345" rx="6" ry="7" fill="#777" stroke="#000" stroke-width="1"/><path d="M764.6,323 L794.6,321 L795,349 L780,349 L780,369 L764.6,370 Z" fill="#555" stroke="#000" stroke-width="1" /><ellipse cx="780" cy="337" rx="6" ry="6.5" fill="#999" stroke="#000" stroke-width="1"/><circle cx="772" cy="362" r="2.5" fill="#222"/><polygon points="139.0,394.0 270.0,448.0 403.0,422.0 403.0,815.0 270.0,843.0 139.0,788.0" fill="#2d2d2d" stroke="#000" stroke-width="1.2" stroke-linejoin="round" /><line x1="140.4" y1="398.6" x2="140.4" y2="786.6" stroke="#050505" stroke-width="1.4" stroke-linecap="butt" /><line x1="148.7" y1="402.0" x2="148.7" y2="790.0" stroke="#050505" stroke-width="1.4" stroke-linecap="butt" /><line x1="150.0" y1="404.0" x2="150.0" y2="788.0" stroke="#8c8c8c" stroke-width="0.9" stroke-linecap="butt" /><line x1="156.9" y1="405.3" x2="156.9" y2="793.3" stroke="#050505" stroke-width="1.4" stroke-linecap="butt" /><line x1="165.2" y1="408.7" x2="165.2" y2="796.7" stroke="#050505" stroke-width="1.4" stroke-linecap="butt" /><line x1="166.5" y1="410.7" x2="166.5" y2="794.7" stroke="#8c8c8c" stroke-width="0.9" stroke-linecap="butt" /><line x1="173.4" y1="412.1" x2="173.4" y2="800.1" stroke="#050505" stroke-width="1.4" stroke-linecap="butt" /><line x1="181.7" y1="415.5" x2="181.7" y2="803.5" stroke="#050505" stroke-width="1.4" stroke-linecap="butt" /><line x1="189.9" y1="418.9" x2="189.9" y2="806.9" stroke="#050505" stroke-width="1.4" stroke-linecap="butt" /><line x1="198.2" y1="422.3" x2="198.2" y2="810.3" stroke="#050505" stroke-width="1.4" stroke-linecap="butt" /><line x1="199.5" y1="424.3" x2="199.5" y2="808.3" stroke="#8c8c8c" stroke-width="0.9" stroke-linecap="butt" /><line x1="206.4" y1="425.6" x2="206.4" y2="813.6" stroke="#050505" stroke-width="1.4" stroke-linecap="butt" /><line x1="214.7" y1="429.0" x2="214.7" y2="817.0" stroke="#050505" stroke-width="1.4" stroke-linecap="butt" /><line x1="222.9" y1="432.4" x2="222.9" y2="820.4" stroke="#050505" stroke-width="1.4" stroke-linecap="butt" /><line x1="231.2" y1="435.8" x2="231.2" y2="823.8" stroke="#050505" stroke-width="1.4" stroke-linecap="butt" /><line x1="232.5" y1="437.8" x2="232.5" y2="821.8" stroke="#8c8c8c" stroke-width="0.9" stroke-linecap="butt" /><line x1="239.4" y1="439.2" x2="239.4" y2="827.2" stroke="#050505" stroke-width="1.4" stroke-linecap="butt" /><line x1="247.7" y1="442.5" x2="247.7" y2="830.5" stroke="#050505" stroke-width="1.4" stroke-linecap="butt" /><line x1="255.9" y1="445.9" x2="255.9" y2="833.9" stroke="#050505" stroke-width="1.4" stroke-linecap="butt" /><line x1="264.1" y1="449.3" x2="264.1" y2="837.3" stroke="#050505" stroke-width="1.4" stroke-linecap="butt" /><line x1="265.4" y1="451.3" x2="265.4" y2="835.3" stroke="#8c8c8c" stroke-width="0.9" stroke-linecap="butt" /><line x1="272.4" y1="451.5" x2="272.4" y2="840.5" stroke="#050505" stroke-width="1.4" stroke-linecap="butt" /><line x1="280.6" y1="449.9" x2="280.6" y2="838.9" stroke="#050505" stroke-width="1.4" stroke-linecap="butt" /><line x1="281.9" y1="451.9" x2="281.9" y2="836.9" stroke="#8c8c8c" stroke-width="0.9" stroke-linecap="butt" /><line x1="288.9" y1="448.2" x2="288.9" y2="837.2" stroke="#050505" stroke-width="1.4" stroke-linecap="butt" /><line x1="297.1" y1="446.6" x2="297.1" y2="835.6" stroke="#050505" stroke-width="1.4" stroke-linecap="butt" /><line x1="298.4" y1="448.6" x2="298.4" y2="833.6" stroke="#8c8c8c" stroke-width="0.9" stroke-linecap="butt" /><line x1="305.4" y1="444.9" x2="305.4" y2="833.9" stroke="#050505" stroke-width="1.4" stroke-linecap="butt" /><line x1="313.6" y1="443.3" x2="313.6" y2="832.3" stroke="#050505" stroke-width="1.4" stroke-linecap="butt" /><line x1="314.9" y1="445.3" x2="314.9" y2="830.3" stroke="#8c8c8c" stroke-width="0.9" stroke-linecap="butt" /><line x1="321.9" y1="441.6" x2="321.9" y2="830.6" stroke="#050505" stroke-width="1.4" stroke-linecap="butt" /><line x1="330.1" y1="440.0" x2="330.1" y2="829.0" stroke="#050505" stroke-width="1.4" stroke-linecap="butt" /><line x1="331.4" y1="442.0" x2="331.4" y2="827.0" stroke="#8c8c8c" stroke-width="0.9" stroke-linecap="butt" /><line x1="338.4" y1="438.3" x2="338.4" y2="827.3" stroke="#050505" stroke-width="1.4" stroke-linecap="butt" /><line x1="346.6" y1="436.7" x2="346.6" y2="825.7" stroke="#050505" stroke-width="1.4" stroke-linecap="butt" /><line x1="347.9" y1="438.7" x2="347.9" y2="823.7" stroke="#8c8c8c" stroke-width="0.9" stroke-linecap="butt" /><line x1="354.9" y1="435.0" x2="354.9" y2="824.0" stroke="#050505" stroke-width="1.4" stroke-linecap="butt" /><line x1="363.1" y1="433.4" x2="363.1" y2="822.4" stroke="#050505" stroke-width="1.4" stroke-linecap="butt" /><line x1="364.4" y1="435.4" x2="364.4" y2="820.4" stroke="#8c8c8c" stroke-width="0.9" stroke-linecap="butt" /><line x1="371.4" y1="431.7" x2="371.4" y2="820.7" stroke="#050505" stroke-width="1.4" stroke-linecap="butt" /><line x1="379.6" y1="430.1" x2="379.6" y2="819.1" stroke="#050505" stroke-width="1.4" stroke-linecap="butt" /><line x1="380.9" y1="432.1" x2="380.9" y2="817.1" stroke="#8c8c8c" stroke-width="0.9" stroke-linecap="butt" /><line x1="387.9" y1="428.4" x2="387.9" y2="817.4" stroke="#050505" stroke-width="1.4" stroke-linecap="butt" /><line x1="396.1" y1="426.8" x2="396.1" y2="815.8" stroke="#050505" stroke-width="1.4" stroke-linecap="butt" /><line x1="397.4" y1="428.8" x2="397.4" y2="813.8" stroke="#8c8c8c" stroke-width="0.9" stroke-linecap="butt" /><path d="M137.8,766.82 L140.2,786.82 M144.2,766.82 L141.8,786.82" fill="none" stroke="#000" stroke-width="1.6" /><path d="M137.8,766.82 L140.2,784.82 M144.2,766.82 L141.8,784.82" fill="none" stroke="#8a8a8a" stroke-width="0.8" stroke-dasharray="3,2"/><path d="M146.05,770.2025 L148.45,790.2025 M152.45,770.2025 L150.05,790.2025" fill="none" stroke="#000" stroke-width="1.6" /><path d="M146.05,770.2025 L148.45,788.2025 M152.45,770.2025 L150.05,788.2025" fill="none" stroke="#8a8a8a" stroke-width="0.8" stroke-dasharray="3,2"/><path d="M154.3,773.585 L156.7,793.585 M160.7,773.585 L158.3,793.585" fill="none" stroke="#000" stroke-width="1.6" /><path d="M154.3,773.585 L156.7,791.585 M160.7,773.585 L158.3,791.585" fill="none" stroke="#8a8a8a" stroke-width="0.8" stroke-dasharray="3,2"/><path d="M162.55,776.9675 L164.95,796.9675 M168.95,776.9675 L166.55,796.9675" fill="none" stroke="#000" stroke-width="1.6" /><path d="M162.55,776.9675 L164.95,794.9675 M168.95,776.9675 L166.55,794.9675" fill="none" stroke="#8a8a8a" stroke-width="0.8" stroke-dasharray="3,2"/><path d="M170.8,780.35 L173.2,800.35 M177.2,780.35 L174.8,800.35" fill="none" stroke="#000" stroke-width="1.6" /><path d="M170.8,780.35 L173.2,798.35 M177.2,780.35 L174.8,798.35" fill="none" stroke="#8a8a8a" stroke-width="0.8" stroke-dasharray="3,2"/><path d="M179.05,783.7325 L181.45,803.7325 M185.45,783.7325 L183.05,803.7325" fill="none" stroke="#000" stroke-width="1.6" /><path d="M179.05,783.7325 L181.45,801.7325 M185.45,783.7325 L183.05,801.7325" fill="none" stroke="#8a8a8a" stroke-width="0.8" stroke-dasharray="3,2"/><path d="M187.3,787.115 L189.7,807.115 M193.7,787.115 L191.3,807.115" fill="none" stroke="#000" stroke-width="1.6" /><path d="M187.3,787.115 L189.7,805.115 M193.7,787.115 L191.3,805.115" fill="none" stroke="#8a8a8a" stroke-width="0.8" stroke-dasharray="3,2"/><path d="M195.55,790.4975 L197.95,810.4975 M201.95,790.4975 L199.55,810.4975" fill="none" stroke="#000" stroke-width="1.6" /><path d="M195.55,790.4975 L197.95,808.4975 M201.95,790.4975 L199.55,808.4975" fill="none" stroke="#8a8a8a" stroke-width="0.8" stroke-dasharray="3,2"/><path d="M203.8,793.88 L206.2,813.88 M210.2,793.88 L207.8,813.88" fill="none" stroke="#000" stroke-width="1.6" /><path d="M203.8,793.88 L206.2,811.88 M210.2,793.88 L207.8,811.88" fill="none" stroke="#8a8a8a" stroke-width="0.8" stroke-dasharray="3,2"/><path d="M212.05,797.2625 L214.45,817.2625 M218.45,797.2625 L216.05,817.2625" fill="none" stroke="#000" stroke-width="1.6" /><path d="M212.05,797.2625 L214.45,815.2625 M218.45,797.2625 L216.05,815.2625" fill="none" stroke="#8a8a8a" stroke-width="0.8" stroke-dasharray="3,2"/><path d="M220.3,800.645 L222.7,820.645 M226.7,800.645 L224.3,820.645" fill="none" stroke="#000" stroke-width="1.6" /><path d="M220.3,800.645 L222.7,818.645 M226.7,800.645 L224.3,818.645" fill="none" stroke="#8a8a8a" stroke-width="0.8" stroke-dasharray="3,2"/><path d="M228.55,804.0275 L230.95,824.0275 M234.95,804.0275 L232.55,824.0275" fill="none" stroke="#000" stroke-width="1.6" /><path d="M228.55,804.0275 L230.95,822.0275 M234.95,804.0275 L232.55,822.0275" fill="none" stroke="#8a8a8a" stroke-width="0.8" stroke-dasharray="3,2"/><path d="M236.8,807.41 L239.2,827.41 M243.2,807.41 L240.8,827.41" fill="none" stroke="#000" stroke-width="1.6" /><path d="M236.8,807.41 L239.2,825.41 M243.2,807.41 L240.8,825.41" fill="none" stroke="#8a8a8a" stroke-width="0.8" stroke-dasharray="3,2"/><path d="M245.05,810.7925 L247.45,830.7925 M251.45,810.7925 L249.05,830.7925" fill="none" stroke="#000" stroke-width="1.6" /><path d="M245.05,810.7925 L247.45,828.7925 M251.45,810.7925 L249.05,828.7925" fill="none" stroke="#8a8a8a" stroke-width="0.8" stroke-dasharray="3,2"/><path d="M253.3,814.175 L255.7,834.175 M259.7,814.175 L257.3,834.175" fill="none" stroke="#000" stroke-width="1.6" /><path d="M253.3,814.175 L255.7,832.175 M259.7,814.175 L257.3,832.175" fill="none" stroke="#8a8a8a" stroke-width="0.8" stroke-dasharray="3,2"/><path d="M261.55,817.5575 L263.95,837.5575 M267.95,817.5575 L265.55,837.5575" fill="none" stroke="#000" stroke-width="1.6" /><path d="M261.55,817.5575 L263.95,835.5575 M267.95,817.5575 L265.55,835.5575" fill="none" stroke="#8a8a8a" stroke-width="0.8" stroke-dasharray="3,2"/><path d="M269.8,820.4 L272.2,840.4 M276.2,820.4 L273.8,840.4" fill="none" stroke="#000" stroke-width="1.6" /><path d="M269.8,820.4 L272.2,838.4 M276.2,820.4 L273.8,838.4" fill="none" stroke="#8a8a8a" stroke-width="0.8" stroke-dasharray="3,2"/><path d="M278.05,818.75 L280.45,838.75 M284.45,818.75 L282.05,838.75" fill="none" stroke="#000" stroke-width="1.6" /><path d="M278.05,818.75 L280.45,836.75 M284.45,818.75 L282.05,836.75" fill="none" stroke="#8a8a8a" stroke-width="0.8" stroke-dasharray="3,2"/><path d="M286.3,817.1 L288.7,837.1 M292.7,817.1 L290.3,837.1" fill="none" stroke="#000" stroke-width="1.6" /><path d="M286.3,817.1 L288.7,835.1 M292.7,817.1 L290.3,835.1" fill="none" stroke="#8a8a8a" stroke-width="0.8" stroke-dasharray="3,2"/><path d="M294.55,815.45 L296.95,835.45 M300.95,815.45 L298.55,835.45" fill="none" stroke="#000" stroke-width="1.6" /><path d="M294.55,815.45 L296.95,833.45 M300.95,815.45 L298.55,833.45" fill="none" stroke="#8a8a8a" stroke-width="0.8" stroke-dasharray="3,2"/><path d="M302.8,813.8 L305.2,833.8 M309.2,813.8 L306.8,833.8" fill="none" stroke="#000" stroke-width="1.6" /><path d="M302.8,813.8 L305.2,831.8 M309.2,813.8 L306.8,831.8" fill="none" stroke="#8a8a8a" stroke-width="0.8" stroke-dasharray="3,2"/><path d="M311.05,812.15 L313.45,832.15 M317.45,812.15 L315.05,832.15" fill="none" stroke="#000" stroke-width="1.6" /><path d="M311.05,812.15 L313.45,830.15 M317.45,812.15 L315.05,830.15" fill="none" stroke="#8a8a8a" stroke-width="0.8" stroke-dasharray="3,2"/><path d="M319.3,810.5 L321.7,830.5 M325.7,810.5 L323.3,830.5" fill="none" stroke="#000" stroke-width="1.6" /><path d="M319.3,810.5 L321.7,828.5 M325.7,810.5 L323.3,828.5" fill="none" stroke="#8a8a8a" stroke-width="0.8" stroke-dasharray="3,2"/><path d="M327.55,808.85 L329.95,828.85 M333.95,808.85 L331.55,828.85" fill="none" stroke="#000" stroke-width="1.6" /><path d="M327.55,808.85 L329.95,826.85 M333.95,808.85 L331.55,826.85" fill="none" stroke="#8a8a8a" stroke-width="0.8" stroke-dasharray="3,2"/><path d="M335.8,807.2 L338.2,827.2 M342.2,807.2 L339.8,827.2" fill="none" stroke="#000" stroke-width="1.6" /><path d="M335.8,807.2 L338.2,825.2 M342.2,807.2 L339.8,825.2" fill="none" stroke="#8a8a8a" stroke-width="0.8" stroke-dasharray="3,2"/><path d="M344.05,805.55 L346.45,825.55 M350.45,805.55 L348.05,825.55" fill="none" stroke="#000" stroke-width="1.6" /><path d="M344.05,805.55 L346.45,823.55 M350.45,805.55 L348.05,823.55" fill="none" stroke="#8a8a8a" stroke-width="0.8" stroke-dasharray="3,2"/><path d="M352.3,803.9 L354.7,823.9 M358.7,803.9 L356.3,823.9" fill="none" stroke="#000" stroke-width="1.6" /><path d="M352.3,803.9 L354.7,821.9 M358.7,803.9 L356.3,821.9" fill="none" stroke="#8a8a8a" stroke-width="0.8" stroke-dasharray="3,2"/><path d="M360.55,802.25 L362.95,822.25 M366.95,802.25 L364.55,822.25" fill="none" stroke="#000" stroke-width="1.6" /><path d="M360.55,802.25 L362.95,820.25 M366.95,802.25 L364.55,820.25" fill="none" stroke="#8a8a8a" stroke-width="0.8" stroke-dasharray="3,2"/><path d="M368.8,800.6 L371.2,820.6 M375.2,800.6 L372.8,820.6" fill="none" stroke="#000" stroke-width="1.6" /><path d="M368.8,800.6 L371.2,818.6 M375.2,800.6 L372.8,818.6" fill="none" stroke="#8a8a8a" stroke-width="0.8" stroke-dasharray="3,2"/><path d="M377.05,798.95 L379.45,818.95 M383.45,798.95 L381.05,818.95" fill="none" stroke="#000" stroke-width="1.6" /><path d="M377.05,798.95 L379.45,816.95 M383.45,798.95 L381.05,816.95" fill="none" stroke="#8a8a8a" stroke-width="0.8" stroke-dasharray="3,2"/><path d="M385.3,797.3 L387.7,817.3 M391.7,797.3 L389.3,817.3" fill="none" stroke="#000" stroke-width="1.6" /><path d="M385.3,797.3 L387.7,815.3 M391.7,797.3 L389.3,815.3" fill="none" stroke="#8a8a8a" stroke-width="0.8" stroke-dasharray="3,2"/><path d="M393.55,795.65 L395.95,815.65 M399.95,795.65 L397.55,815.65" fill="none" stroke="#000" stroke-width="1.6" /><path d="M393.55,795.65 L395.95,813.65 M399.95,795.65 L397.55,813.65" fill="none" stroke="#8a8a8a" stroke-width="0.8" stroke-dasharray="3,2"/><path d="M401.8,794.0 L404.2,814.0 M408.2,794.0 L405.8,814.0" fill="none" stroke="#000" stroke-width="1.6" /><path d="M401.8,794.0 L404.2,812.0 M408.2,794.0 L405.8,812.0" fill="none" stroke="#8a8a8a" stroke-width="0.8" stroke-dasharray="3,2"/><rect x="273.5" y="836.5" width="5" height="5" fill="#8a8a8a" stroke="#111" stroke-width="0.8"/><rect x="280.9" y="834.8" width="5" height="5" fill="#8a8a8a" stroke="#111" stroke-width="0.8"/><rect x="288.3" y="833.1" width="5" height="5" fill="#8a8a8a" stroke="#111" stroke-width="0.8"/><rect x="295.7" y="831.3" width="5" height="5" fill="#8a8a8a" stroke="#111" stroke-width="0.8"/><rect x="303.1" y="829.6" width="5" height="5" fill="#8a8a8a" stroke="#111" stroke-width="0.8"/><rect x="310.5" y="827.9" width="5" height="5" fill="#8a8a8a" stroke="#111" stroke-width="0.8"/><rect x="317.9" y="826.2" width="5" height="5" fill="#8a8a8a" stroke="#111" stroke-width="0.8"/><rect x="325.3" y="824.5" width="5" height="5" fill="#8a8a8a" stroke="#111" stroke-width="0.8"/><rect x="332.7" y="822.8" width="5" height="5" fill="#8a8a8a" stroke="#111" stroke-width="0.8"/><rect x="340.1" y="821.0" width="5" height="5" fill="#8a8a8a" stroke="#111" stroke-width="0.8"/><rect x="347.5" y="819.3" width="5" height="5" fill="#8a8a8a" stroke="#111" stroke-width="0.8"/><rect x="354.9" y="817.6" width="5" height="5" fill="#8a8a8a" stroke="#111" stroke-width="0.8"/><rect x="362.3" y="815.9" width="5" height="5" fill="#8a8a8a" stroke="#111" stroke-width="0.8"/><rect x="369.7" y="814.2" width="5" height="5" fill="#8a8a8a" stroke="#111" stroke-width="0.8"/><rect x="377.1" y="812.5" width="5" height="5" fill="#8a8a8a" stroke="#111" stroke-width="0.8"/><rect x="384.5" y="810.7" width="5" height="5" fill="#8a8a8a" stroke="#111" stroke-width="0.8"/><rect x="391.9" y="809.0" width="5" height="5" fill="#8a8a8a" stroke="#111" stroke-width="0.8"/><rect x="399.3" y="807.3" width="5" height="5" fill="#8a8a8a" stroke="#111" stroke-width="0.8"/><rect x="406.7" y="805.6" width="5" height="5" fill="#8a8a8a" stroke="#111" stroke-width="0.8"/><line x1="276.0" y1="845.0" x2="414.0" y2="813.0" stroke="#0a0a0a" stroke-width="10.8" stroke-linecap="round" /><line x1="276.0" y1="845.0" x2="414.0" y2="813.0" stroke="#878787" stroke-width="8.8" stroke-linecap="round" /><line x1="275.7" y1="843.7" x2="413.7" y2="811.7" stroke="#a4a4a4" stroke-width="2.88" stroke-linecap="round" /><line x1="276.7" y1="847.8" x2="414.7" y2="815.8" stroke="#6c6c6c" stroke-width="2.5200000000000005" stroke-linecap="round" /><rect x="143.5" y="782.0" width="5" height="5" fill="#8a8a8a" stroke="#111" stroke-width="0.7"/><rect x="150.5" y="780.5" width="5" height="5" fill="#8a8a8a" stroke="#111" stroke-width="0.7"/><line x1="141.5" y1="791.0" x2="155.5" y2="788.0" stroke="#0a0a0a" stroke-width="10.3" stroke-linecap="round" /><line x1="141.5" y1="791.0" x2="155.5" y2="788.0" stroke="#878787" stroke-width="8.3" stroke-linecap="round" /><line x1="141.2" y1="789.8" x2="155.2" y2="786.8" stroke="#a4a4a4" stroke-width="2.72" stroke-linecap="round" /><line x1="142.1" y1="793.7" x2="156.1" y2="790.7" stroke="#6c6c6c" stroke-width="2.3800000000000003" stroke-linecap="round" /><ellipse cx="142.0" cy="791.0" rx="4.0" ry="4.5" fill="url(#gc)" stroke="#000" stroke-width="0.9"/><rect x="160.1" y="788.8" width="5" height="5" fill="#8a8a8a" stroke="#111" stroke-width="0.7"/><rect x="167.1" y="787.2" width="5" height="5" fill="#8a8a8a" stroke="#111" stroke-width="0.7"/><line x1="158.1" y1="797.8" x2="172.1" y2="794.8" stroke="#0a0a0a" stroke-width="10.3" stroke-linecap="round" /><line x1="158.1" y1="797.8" x2="172.1" y2="794.8" stroke="#878787" stroke-width="8.3" stroke-linecap="round" /><line x1="157.8" y1="796.5" x2="171.8" y2="793.5" stroke="#a4a4a4" stroke-width="2.72" stroke-linecap="round" /><line x1="158.7" y1="800.4" x2="172.7" y2="797.4" stroke="#6c6c6c" stroke-width="2.3800000000000003" stroke-linecap="round" /><ellipse cx="158.6" cy="797.8" rx="4.0" ry="4.5" fill="url(#gc)" stroke="#000" stroke-width="0.9"/><rect x="176.7" y="795.5" width="5" height="5" fill="#8a8a8a" stroke="#111" stroke-width="0.7"/><rect x="183.7" y="794.0" width="5" height="5" fill="#8a8a8a" stroke="#111" stroke-width="0.7"/><line x1="174.7" y1="804.5" x2="188.7" y2="801.5" stroke="#0a0a0a" stroke-width="10.3" stroke-linecap="round" /><line x1="174.7" y1="804.5" x2="188.7" y2="801.5" stroke="#878787" stroke-width="8.3" stroke-linecap="round" /><line x1="174.4" y1="803.3" x2="188.4" y2="800.3" stroke="#a4a4a4" stroke-width="2.72" stroke-linecap="round" /><line x1="175.3" y1="807.2" x2="189.3" y2="804.2" stroke="#6c6c6c" stroke-width="2.3800000000000003" stroke-linecap="round" /><ellipse cx="175.2" cy="804.5" rx="4.0" ry="4.5" fill="url(#gc)" stroke="#000" stroke-width="0.9"/><rect x="193.3" y="802.2" width="5" height="5" fill="#8a8a8a" stroke="#111" stroke-width="0.7"/><rect x="200.3" y="800.8" width="5" height="5" fill="#8a8a8a" stroke="#111" stroke-width="0.7"/><line x1="191.3" y1="811.2" x2="205.3" y2="808.2" stroke="#0a0a0a" stroke-width="10.3" stroke-linecap="round" /><line x1="191.3" y1="811.2" x2="205.3" y2="808.2" stroke="#878787" stroke-width="8.3" stroke-linecap="round" /><line x1="191.0" y1="810.0" x2="205.0" y2="807.0" stroke="#a4a4a4" stroke-width="2.72" stroke-linecap="round" /><line x1="191.9" y1="813.9" x2="205.9" y2="810.9" stroke="#6c6c6c" stroke-width="2.3800000000000003" stroke-linecap="round" /><ellipse cx="191.8" cy="811.2" rx="4.0" ry="4.5" fill="url(#gc)" stroke="#000" stroke-width="0.9"/><rect x="209.9" y="809.0" width="5" height="5" fill="#8a8a8a" stroke="#111" stroke-width="0.7"/><rect x="216.9" y="807.5" width="5" height="5" fill="#8a8a8a" stroke="#111" stroke-width="0.7"/><line x1="207.9" y1="818.0" x2="221.9" y2="815.0" stroke="#0a0a0a" stroke-width="10.3" stroke-linecap="round" /><line x1="207.9" y1="818.0" x2="221.9" y2="815.0" stroke="#878787" stroke-width="8.3" stroke-linecap="round" /><line x1="207.6" y1="816.8" x2="221.6" y2="813.8" stroke="#a4a4a4" stroke-width="2.72" stroke-linecap="round" /><line x1="208.5" y1="820.7" x2="222.5" y2="817.7" stroke="#6c6c6c" stroke-width="2.3800000000000003" stroke-linecap="round" /><ellipse cx="208.4" cy="818.0" rx="4.0" ry="4.5" fill="url(#gc)" stroke="#000" stroke-width="0.9"/><rect x="226.5" y="815.8" width="5" height="5" fill="#8a8a8a" stroke="#111" stroke-width="0.7"/><rect x="233.5" y="814.2" width="5" height="5" fill="#8a8a8a" stroke="#111" stroke-width="0.7"/><line x1="224.5" y1="824.8" x2="238.5" y2="821.8" stroke="#0a0a0a" stroke-width="10.3" stroke-linecap="round" /><line x1="224.5" y1="824.8" x2="238.5" y2="821.8" stroke="#878787" stroke-width="8.3" stroke-linecap="round" /><line x1="224.2" y1="823.5" x2="238.2" y2="820.5" stroke="#a4a4a4" stroke-width="2.72" stroke-linecap="round" /><line x1="225.1" y1="827.4" x2="239.1" y2="824.4" stroke="#6c6c6c" stroke-width="2.3800000000000003" stroke-linecap="round" /><ellipse cx="225.0" cy="824.8" rx="4.0" ry="4.5" fill="url(#gc)" stroke="#000" stroke-width="0.9"/><rect x="243.1" y="822.5" width="5" height="5" fill="#8a8a8a" stroke="#111" stroke-width="0.7"/><rect x="250.1" y="821.0" width="5" height="5" fill="#8a8a8a" stroke="#111" stroke-width="0.7"/><line x1="241.1" y1="831.5" x2="255.1" y2="828.5" stroke="#0a0a0a" stroke-width="10.3" stroke-linecap="round" /><line x1="241.1" y1="831.5" x2="255.1" y2="828.5" stroke="#878787" stroke-width="8.3" stroke-linecap="round" /><line x1="240.8" y1="830.3" x2="254.8" y2="827.3" stroke="#a4a4a4" stroke-width="2.72" stroke-linecap="round" /><line x1="241.7" y1="834.2" x2="255.7" y2="831.2" stroke="#6c6c6c" stroke-width="2.3800000000000003" stroke-linecap="round" /><ellipse cx="241.6" cy="831.5" rx="4.0" ry="4.5" fill="url(#gc)" stroke="#000" stroke-width="0.9"/><rect x="259.7" y="829.2" width="5" height="5" fill="#8a8a8a" stroke="#111" stroke-width="0.7"/><rect x="266.7" y="827.8" width="5" height="5" fill="#8a8a8a" stroke="#111" stroke-width="0.7"/><line x1="257.7" y1="838.2" x2="271.7" y2="835.2" stroke="#0a0a0a" stroke-width="10.3" stroke-linecap="round" /><line x1="257.7" y1="838.2" x2="271.7" y2="835.2" stroke="#878787" stroke-width="8.3" stroke-linecap="round" /><line x1="257.4" y1="837.0" x2="271.4" y2="834.0" stroke="#a4a4a4" stroke-width="2.72" stroke-linecap="round" /><line x1="258.3" y1="840.9" x2="272.3" y2="837.9" stroke="#6c6c6c" stroke-width="2.3800000000000003" stroke-linecap="round" /><ellipse cx="258.2" cy="838.2" rx="4.0" ry="4.5" fill="url(#gc)" stroke="#000" stroke-width="0.9"/><rect x="276.3" y="836.0" width="5" height="5" fill="#8a8a8a" stroke="#111" stroke-width="0.7"/><rect x="283.3" y="834.5" width="5" height="5" fill="#8a8a8a" stroke="#111" stroke-width="0.7"/><line x1="274.3" y1="845.0" x2="288.3" y2="842.0" stroke="#0a0a0a" stroke-width="10.3" stroke-linecap="round" /><line x1="274.3" y1="845.0" x2="288.3" y2="842.0" stroke="#878787" stroke-width="8.3" stroke-linecap="round" /><line x1="274.0" y1="843.8" x2="288.0" y2="840.8" stroke="#a4a4a4" stroke-width="2.72" stroke-linecap="round" /><line x1="274.9" y1="847.7" x2="288.9" y2="844.7" stroke="#6c6c6c" stroke-width="2.3800000000000003" stroke-linecap="round" /><ellipse cx="274.8" cy="845.0" rx="4.0" ry="4.5" fill="url(#gc)" stroke="#000" stroke-width="0.9"/><path d="M144.5,397.128 L142.3,421.128 M146.5,397.128 L148.7,421.128" fill="none" stroke="#000" stroke-width="1.6" /><path d="M144.5,399.128 L142.3,421.128" fill="none" stroke="#8a8a8a" stroke-width="0.8" stroke-dasharray="3,2"/><path d="M146.5,399.128 L148.7,421.128" fill="none" stroke="#8a8a8a" stroke-width="0.8" stroke-dasharray="3,2"/><path d="M152.75,395.3295 L150.55,419.3295 M154.75,395.3295 L156.95,419.3295" fill="none" stroke="#000" stroke-width="1.6" /><path d="M152.75,397.3295 L150.55,419.3295" fill="none" stroke="#8a8a8a" stroke-width="0.8" stroke-dasharray="3,2"/><path d="M154.75,397.3295 L156.95,419.3295" fill="none" stroke="#8a8a8a" stroke-width="0.8" stroke-dasharray="3,2"/><path d="M161.0,403.878 L158.8,427.878 M163.0,403.878 L165.2,427.878" fill="none" stroke="#000" stroke-width="1.6" /><path d="M161.0,405.878 L158.8,427.878" fill="none" stroke="#8a8a8a" stroke-width="0.8" stroke-dasharray="3,2"/><path d="M163.0,405.878 L165.2,427.878" fill="none" stroke="#8a8a8a" stroke-width="0.8" stroke-dasharray="3,2"/><path d="M169.25,402.0795 L167.05,426.0795 M171.25,402.0795 L173.45,426.0795" fill="none" stroke="#000" stroke-width="1.6" /><path d="M169.25,404.0795 L167.05,426.0795" fill="none" stroke="#8a8a8a" stroke-width="0.8" stroke-dasharray="3,2"/><path d="M171.25,404.0795 L173.45,426.0795" fill="none" stroke="#8a8a8a" stroke-width="0.8" stroke-dasharray="3,2"/><path d="M177.5,410.628 L175.3,434.628 M179.5,410.628 L181.7,434.628" fill="none" stroke="#000" stroke-width="1.6" /><path d="M177.5,412.628 L175.3,434.628" fill="none" stroke="#8a8a8a" stroke-width="0.8" stroke-dasharray="3,2"/><path d="M179.5,412.628 L181.7,434.628" fill="none" stroke="#8a8a8a" stroke-width="0.8" stroke-dasharray="3,2"/><path d="M185.75,408.8295 L183.55,432.8295 M187.75,408.8295 L189.95,432.8295" fill="none" stroke="#000" stroke-width="1.6" /><path d="M185.75,410.8295 L183.55,432.8295" fill="none" stroke="#8a8a8a" stroke-width="0.8" stroke-dasharray="3,2"/><path d="M187.75,410.8295 L189.95,432.8295" fill="none" stroke="#8a8a8a" stroke-width="0.8" stroke-dasharray="3,2"/><path d="M194.0,417.378 L191.8,441.378 M196.0,417.378 L198.2,441.378" fill="none" stroke="#000" stroke-width="1.6" /><path d="M194.0,419.378 L191.8,441.378" fill="none" stroke="#8a8a8a" stroke-width="0.8" stroke-dasharray="3,2"/><path d="M196.0,419.378 L198.2,441.378" fill="none" stroke="#8a8a8a" stroke-width="0.8" stroke-dasharray="3,2"/><path d="M202.25,415.5795 L200.05,439.5795 M204.25,415.5795 L206.45,439.5795" fill="none" stroke="#000" stroke-width="1.6" /><path d="M202.25,417.5795 L200.05,439.5795" fill="none" stroke="#8a8a8a" stroke-width="0.8" stroke-dasharray="3,2"/><path d="M204.25,417.5795 L206.45,439.5795" fill="none" stroke="#8a8a8a" stroke-width="0.8" stroke-dasharray="3,2"/><path d="M210.5,424.128 L208.3,448.128 M212.5,424.128 L214.7,448.128" fill="none" stroke="#000" stroke-width="1.6" /><path d="M210.5,426.128 L208.3,448.128" fill="none" stroke="#8a8a8a" stroke-width="0.8" stroke-dasharray="3,2"/><path d="M212.5,426.128 L214.7,448.128" fill="none" stroke="#8a8a8a" stroke-width="0.8" stroke-dasharray="3,2"/><path d="M218.75,422.3295 L216.55,446.3295 M220.75,422.3295 L222.95,446.3295" fill="none" stroke="#000" stroke-width="1.6" /><path d="M218.75,424.3295 L216.55,446.3295" fill="none" stroke="#8a8a8a" stroke-width="0.8" stroke-dasharray="3,2"/><path d="M220.75,424.3295 L222.95,446.3295" fill="none" stroke="#8a8a8a" stroke-width="0.8" stroke-dasharray="3,2"/><path d="M227.0,430.878 L224.8,454.878 M229.0,430.878 L231.2,454.878" fill="none" stroke="#000" stroke-width="1.6" /><path d="M227.0,432.878 L224.8,454.878" fill="none" stroke="#8a8a8a" stroke-width="0.8" stroke-dasharray="3,2"/><path d="M229.0,432.878 L231.2,454.878" fill="none" stroke="#8a8a8a" stroke-width="0.8" stroke-dasharray="3,2"/><path d="M235.25,429.0795 L233.05,453.0795 M237.25,429.0795 L239.45,453.0795" fill="none" stroke="#000" stroke-width="1.6" /><path d="M235.25,431.0795 L233.05,453.0795" fill="none" stroke="#8a8a8a" stroke-width="0.8" stroke-dasharray="3,2"/><path d="M237.25,431.0795 L239.45,453.0795" fill="none" stroke="#8a8a8a" stroke-width="0.8" stroke-dasharray="3,2"/><path d="M243.5,437.628 L241.3,461.628 M245.5,437.628 L247.7,461.628" fill="none" stroke="#000" stroke-width="1.6" /><path d="M243.5,439.628 L241.3,461.628" fill="none" stroke="#8a8a8a" stroke-width="0.8" stroke-dasharray="3,2"/><path d="M245.5,439.628 L247.7,461.628" fill="none" stroke="#8a8a8a" stroke-width="0.8" stroke-dasharray="3,2"/><path d="M251.75,435.8295 L249.55,459.8295 M253.75,435.8295 L255.95,459.8295" fill="none" stroke="#000" stroke-width="1.6" /><path d="M251.75,437.8295 L249.55,459.8295" fill="none" stroke="#8a8a8a" stroke-width="0.8" stroke-dasharray="3,2"/><path d="M253.75,437.8295 L255.95,459.8295" fill="none" stroke="#8a8a8a" stroke-width="0.8" stroke-dasharray="3,2"/><path d="M260.0,444.378 L257.8,468.378 M262.0,444.378 L264.2,468.378" fill="none" stroke="#000" stroke-width="1.6" /><path d="M260.0,446.378 L257.8,468.378" fill="none" stroke="#8a8a8a" stroke-width="0.8" stroke-dasharray="3,2"/><path d="M262.0,446.378 L264.2,468.378" fill="none" stroke="#8a8a8a" stroke-width="0.8" stroke-dasharray="3,2"/><path d="M268.25,442.5795 L266.05,466.5795 M270.25,442.5795 L272.45,466.5795" fill="none" stroke="#000" stroke-width="1.6" /><path d="M268.25,444.5795 L266.05,466.5795" fill="none" stroke="#8a8a8a" stroke-width="0.8" stroke-dasharray="3,2"/><path d="M270.25,444.5795 L272.45,466.5795" fill="none" stroke="#8a8a8a" stroke-width="0.8" stroke-dasharray="3,2"/><path d="M276.5,451.128 L274.3,475.128 M278.5,451.128 L280.7,475.128" fill="none" stroke="#000" stroke-width="1.6" /><path d="M276.5,453.128 L274.3,475.128" fill="none" stroke="#8a8a8a" stroke-width="0.8" stroke-dasharray="3,2"/><path d="M278.5,453.128 L280.7,475.128" fill="none" stroke="#8a8a8a" stroke-width="0.8" stroke-dasharray="3,2"/><path d="M284.75,449.3295 L282.55,473.3295 M286.75,449.3295 L288.95,473.3295" fill="none" stroke="#000" stroke-width="1.6" /><path d="M284.75,451.3295 L282.55,473.3295" fill="none" stroke="#8a8a8a" stroke-width="0.8" stroke-dasharray="3,2"/><path d="M286.75,451.3295 L288.95,473.3295" fill="none" stroke="#8a8a8a" stroke-width="0.8" stroke-dasharray="3,2"/><path d="M273.0,450.128 L270.8,476.128 M275.0,450.128 L277.2,476.128" fill="none" stroke="#000" stroke-width="1.6" /><path d="M273.0,452.128 L270.8,476.128" fill="none" stroke="#8a8a8a" stroke-width="0.8" stroke-dasharray="3,2"/><path d="M275.0,452.128 L277.2,476.128" fill="none" stroke="#8a8a8a" stroke-width="0.8" stroke-dasharray="3,2"/><path d="M281.25,448.3295 L279.05,474.3295 M283.25,448.3295 L285.45,474.3295" fill="none" stroke="#000" stroke-width="1.6" /><path d="M281.25,450.3295 L279.05,474.3295" fill="none" stroke="#8a8a8a" stroke-width="0.8" stroke-dasharray="3,2"/><path d="M283.25,450.3295 L285.45,474.3295" fill="none" stroke="#8a8a8a" stroke-width="0.8" stroke-dasharray="3,2"/><path d="M289.5,446.531 L287.3,472.531 M291.5,446.531 L293.7,472.531" fill="none" stroke="#000" stroke-width="1.6" /><path d="M289.5,448.531 L287.3,472.531" fill="none" stroke="#8a8a8a" stroke-width="0.8" stroke-dasharray="3,2"/><path d="M291.5,448.531 L293.7,472.531" fill="none" stroke="#8a8a8a" stroke-width="0.8" stroke-dasharray="3,2"/><path d="M297.75,444.7325 L295.55,470.7325 M299.75,444.7325 L301.95,470.7325" fill="none" stroke="#000" stroke-width="1.6" /><path d="M297.75,446.7325 L295.55,470.7325" fill="none" stroke="#8a8a8a" stroke-width="0.8" stroke-dasharray="3,2"/><path d="M299.75,446.7325 L301.95,470.7325" fill="none" stroke="#8a8a8a" stroke-width="0.8" stroke-dasharray="3,2"/><path d="M306.0,442.934 L303.8,468.934 M308.0,442.934 L310.2,468.934" fill="none" stroke="#000" stroke-width="1.6" /><path d="M306.0,444.934 L303.8,468.934" fill="none" stroke="#8a8a8a" stroke-width="0.8" stroke-dasharray="3,2"/><path d="M308.0,444.934 L310.2,468.934" fill="none" stroke="#8a8a8a" stroke-width="0.8" stroke-dasharray="3,2"/><path d="M314.25,441.1355 L312.05,467.1355 M316.25,441.1355 L318.45,467.1355" fill="none" stroke="#000" stroke-width="1.6" /><path d="M314.25,443.1355 L312.05,467.1355" fill="none" stroke="#8a8a8a" stroke-width="0.8" stroke-dasharray="3,2"/><path d="M316.25,443.1355 L318.45,467.1355" fill="none" stroke="#8a8a8a" stroke-width="0.8" stroke-dasharray="3,2"/><path d="M322.5,439.337 L320.3,465.337 M324.5,439.337 L326.7,465.337" fill="none" stroke="#000" stroke-width="1.6" /><path d="M322.5,441.337 L320.3,465.337" fill="none" stroke="#8a8a8a" stroke-width="0.8" stroke-dasharray="3,2"/><path d="M324.5,441.337 L326.7,465.337" fill="none" stroke="#8a8a8a" stroke-width="0.8" stroke-dasharray="3,2"/><path d="M330.75,437.5385 L328.55,463.5385 M332.75,437.5385 L334.95,463.5385" fill="none" stroke="#000" stroke-width="1.6" /><path d="M330.75,439.5385 L328.55,463.5385" fill="none" stroke="#8a8a8a" stroke-width="0.8" stroke-dasharray="3,2"/><path d="M332.75,439.5385 L334.95,463.5385" fill="none" stroke="#8a8a8a" stroke-width="0.8" stroke-dasharray="3,2"/><path d="M339.0,435.74 L336.8,461.74 M341.0,435.74 L343.2,461.74" fill="none" stroke="#000" stroke-width="1.6" /><path d="M339.0,437.74 L336.8,461.74" fill="none" stroke="#8a8a8a" stroke-width="0.8" stroke-dasharray="3,2"/><path d="M341.0,437.74 L343.2,461.74" fill="none" stroke="#8a8a8a" stroke-width="0.8" stroke-dasharray="3,2"/><path d="M347.25,433.9415 L345.05,459.9415 M349.25,433.9415 L351.45,459.9415" fill="none" stroke="#000" stroke-width="1.6" /><path d="M347.25,435.9415 L345.05,459.9415" fill="none" stroke="#8a8a8a" stroke-width="0.8" stroke-dasharray="3,2"/><path d="M349.25,435.9415 L351.45,459.9415" fill="none" stroke="#8a8a8a" stroke-width="0.8" stroke-dasharray="3,2"/><path d="M355.5,432.14300000000003 L353.3,458.14300000000003 M357.5,432.14300000000003 L359.7,458.14300000000003" fill="none" stroke="#000" stroke-width="1.6" /><path d="M355.5,434.14300000000003 L353.3,458.14300000000003" fill="none" stroke="#8a8a8a" stroke-width="0.8" stroke-dasharray="3,2"/><path d="M357.5,434.14300000000003 L359.7,458.14300000000003" fill="none" stroke="#8a8a8a" stroke-width="0.8" stroke-dasharray="3,2"/><path d="M363.75,430.3445 L361.55,456.3445 M365.75,430.3445 L367.95,456.3445" fill="none" stroke="#000" stroke-width="1.6" /><path d="M363.75,432.3445 L361.55,456.3445" fill="none" stroke="#8a8a8a" stroke-width="0.8" stroke-dasharray="3,2"/><path d="M365.75,432.3445 L367.95,456.3445" fill="none" stroke="#8a8a8a" stroke-width="0.8" stroke-dasharray="3,2"/><path d="M372.0,428.546 L369.8,454.546 M374.0,428.546 L376.2,454.546" fill="none" stroke="#000" stroke-width="1.6" /><path d="M372.0,430.546 L369.8,454.546" fill="none" stroke="#8a8a8a" stroke-width="0.8" stroke-dasharray="3,2"/><path d="M374.0,430.546 L376.2,454.546" fill="none" stroke="#8a8a8a" stroke-width="0.8" stroke-dasharray="3,2"/><path d="M380.25,426.7475 L378.05,452.7475 M382.25,426.7475 L384.45,452.7475" fill="none" stroke="#000" stroke-width="1.6" /><path d="M380.25,428.7475 L378.05,452.7475" fill="none" stroke="#8a8a8a" stroke-width="0.8" stroke-dasharray="3,2"/><path d="M382.25,428.7475 L384.45,452.7475" fill="none" stroke="#8a8a8a" stroke-width="0.8" stroke-dasharray="3,2"/><path d="M388.5,424.949 L386.3,450.949 M390.5,424.949 L392.7,450.949" fill="none" stroke="#000" stroke-width="1.6" /><path d="M388.5,426.949 L386.3,450.949" fill="none" stroke="#8a8a8a" stroke-width="0.8" stroke-dasharray="3,2"/><path d="M390.5,426.949 L392.7,450.949" fill="none" stroke="#8a8a8a" stroke-width="0.8" stroke-dasharray="3,2"/><path d="M396.75,423.1505 L394.55,449.1505 M398.75,423.1505 L400.95,449.1505" fill="none" stroke="#000" stroke-width="1.6" /><path d="M396.75,425.1505 L394.55,449.1505" fill="none" stroke="#8a8a8a" stroke-width="0.8" stroke-dasharray="3,2"/><path d="M398.75,425.1505 L400.95,449.1505" fill="none" stroke="#8a8a8a" stroke-width="0.8" stroke-dasharray="3,2"/><path d="M405.0,421.352 L402.8,447.352 M407.0,421.352 L409.2,447.352" fill="none" stroke="#000" stroke-width="1.6" /><path d="M405.0,423.352 L402.8,447.352" fill="none" stroke="#8a8a8a" stroke-width="0.8" stroke-dasharray="3,2"/><path d="M407.0,423.352 L409.2,447.352" fill="none" stroke="#8a8a8a" stroke-width="0.8" stroke-dasharray="3,2"/><line x1="142.5" y1="394.0" x2="283.5" y2="363.0" stroke="#0a0a0a" stroke-width="11.200000000000001" stroke-linecap="round" /><line x1="142.5" y1="394.0" x2="283.5" y2="363.0" stroke="#878787" stroke-width="9.200000000000001" stroke-linecap="round" /><line x1="142.2" y1="392.6" x2="283.2" y2="361.6" stroke="#a4a4a4" stroke-width="3.008" stroke-linecap="round" /><line x1="143.1" y1="396.9" x2="284.1" y2="365.9" stroke="#6c6c6c" stroke-width="2.6320000000000006" stroke-linecap="round" /><ellipse cx="143.0" cy="394.0" rx="4.5" ry="5.0" fill="url(#gc)" stroke="#000" stroke-width="0.9"/><line x1="159.0" y1="400.8" x2="300.0" y2="369.8" stroke="#0a0a0a" stroke-width="11.200000000000001" stroke-linecap="round" /><line x1="159.0" y1="400.8" x2="300.0" y2="369.8" stroke="#878787" stroke-width="9.200000000000001" stroke-linecap="round" /><line x1="158.7" y1="399.4" x2="299.7" y2="368.4" stroke="#a4a4a4" stroke-width="3.008" stroke-linecap="round" /><line x1="159.6" y1="403.7" x2="300.6" y2="372.7" stroke="#6c6c6c" stroke-width="2.6320000000000006" stroke-linecap="round" /><ellipse cx="159.5" cy="400.8" rx="4.5" ry="5.0" fill="url(#gc)" stroke="#000" stroke-width="0.9"/><line x1="175.5" y1="407.5" x2="316.5" y2="376.5" stroke="#0a0a0a" stroke-width="11.200000000000001" stroke-linecap="round" /><line x1="175.5" y1="407.5" x2="316.5" y2="376.5" stroke="#878787" stroke-width="9.200000000000001" stroke-linecap="round" /><line x1="175.2" y1="406.1" x2="316.2" y2="375.1" stroke="#a4a4a4" stroke-width="3.008" stroke-linecap="round" /><line x1="176.1" y1="410.4" x2="317.1" y2="379.4" stroke="#6c6c6c" stroke-width="2.6320000000000006" stroke-linecap="round" /><ellipse cx="176.0" cy="407.5" rx="4.5" ry="5.0" fill="url(#gc)" stroke="#000" stroke-width="0.9"/><line x1="192.0" y1="414.2" x2="333.0" y2="383.2" stroke="#0a0a0a" stroke-width="11.200000000000001" stroke-linecap="round" /><line x1="192.0" y1="414.2" x2="333.0" y2="383.2" stroke="#878787" stroke-width="9.200000000000001" stroke-linecap="round" /><line x1="191.7" y1="412.9" x2="332.7" y2="381.9" stroke="#a4a4a4" stroke-width="3.008" stroke-linecap="round" /><line x1="192.6" y1="417.2" x2="333.6" y2="386.2" stroke="#6c6c6c" stroke-width="2.6320000000000006" stroke-linecap="round" /><ellipse cx="192.5" cy="414.2" rx="4.5" ry="5.0" fill="url(#gc)" stroke="#000" stroke-width="0.9"/><line x1="208.5" y1="421.0" x2="349.5" y2="390.0" stroke="#0a0a0a" stroke-width="11.200000000000001" stroke-linecap="round" /><line x1="208.5" y1="421.0" x2="349.5" y2="390.0" stroke="#878787" stroke-width="9.200000000000001" stroke-linecap="round" /><line x1="208.2" y1="419.6" x2="349.2" y2="388.6" stroke="#a4a4a4" stroke-width="3.008" stroke-linecap="round" /><line x1="209.1" y1="423.9" x2="350.1" y2="392.9" stroke="#6c6c6c" stroke-width="2.6320000000000006" stroke-linecap="round" /><ellipse cx="209.0" cy="421.0" rx="4.5" ry="5.0" fill="url(#gc)" stroke="#000" stroke-width="0.9"/><line x1="225.0" y1="427.8" x2="366.0" y2="396.8" stroke="#0a0a0a" stroke-width="11.200000000000001" stroke-linecap="round" /><line x1="225.0" y1="427.8" x2="366.0" y2="396.8" stroke="#878787" stroke-width="9.200000000000001" stroke-linecap="round" /><line x1="224.7" y1="426.4" x2="365.7" y2="395.4" stroke="#a4a4a4" stroke-width="3.008" stroke-linecap="round" /><line x1="225.6" y1="430.7" x2="366.6" y2="399.7" stroke="#6c6c6c" stroke-width="2.6320000000000006" stroke-linecap="round" /><ellipse cx="225.5" cy="427.8" rx="4.5" ry="5.0" fill="url(#gc)" stroke="#000" stroke-width="0.9"/><line x1="241.5" y1="434.5" x2="382.5" y2="403.5" stroke="#0a0a0a" stroke-width="11.200000000000001" stroke-linecap="round" /><line x1="241.5" y1="434.5" x2="382.5" y2="403.5" stroke="#878787" stroke-width="9.200000000000001" stroke-linecap="round" /><line x1="241.2" y1="433.1" x2="382.2" y2="402.1" stroke="#a4a4a4" stroke-width="3.008" stroke-linecap="round" /><line x1="242.1" y1="437.4" x2="383.1" y2="406.4" stroke="#6c6c6c" stroke-width="2.6320000000000006" stroke-linecap="round" /><ellipse cx="242.0" cy="434.5" rx="4.5" ry="5.0" fill="url(#gc)" stroke="#000" stroke-width="0.9"/><line x1="258.0" y1="441.2" x2="399.0" y2="410.2" stroke="#0a0a0a" stroke-width="11.200000000000001" stroke-linecap="round" /><line x1="258.0" y1="441.2" x2="399.0" y2="410.2" stroke="#878787" stroke-width="9.200000000000001" stroke-linecap="round" /><line x1="257.7" y1="439.9" x2="398.7" y2="408.9" stroke="#a4a4a4" stroke-width="3.008" stroke-linecap="round" /><line x1="258.6" y1="444.2" x2="399.6" y2="413.2" stroke="#6c6c6c" stroke-width="2.6320000000000006" stroke-linecap="round" /><ellipse cx="258.5" cy="441.2" rx="4.5" ry="5.0" fill="url(#gc)" stroke="#000" stroke-width="0.9"/><line x1="274.5" y1="448.0" x2="415.5" y2="417.0" stroke="#0a0a0a" stroke-width="11.200000000000001" stroke-linecap="round" /><line x1="274.5" y1="448.0" x2="415.5" y2="417.0" stroke="#878787" stroke-width="9.200000000000001" stroke-linecap="round" /><line x1="274.2" y1="446.6" x2="415.2" y2="415.6" stroke="#a4a4a4" stroke-width="3.008" stroke-linecap="round" /><line x1="275.1" y1="450.9" x2="416.1" y2="419.9" stroke="#6c6c6c" stroke-width="2.6320000000000006" stroke-linecap="round" /><ellipse cx="275.0" cy="448.0" rx="4.5" ry="5.0" fill="url(#gc)" stroke="#000" stroke-width="0.9"/><rect x="273.0" y="452.2" width="6" height="5" rx="1.5" fill="#5e5e5e" stroke="#111" stroke-width="0.8"/><rect x="281.1" y="450.4" width="6" height="5" rx="1.5" fill="#5e5e5e" stroke="#111" stroke-width="0.8"/><rect x="289.2" y="448.7" width="6" height="5" rx="1.5" fill="#5e5e5e" stroke="#111" stroke-width="0.8"/><rect x="297.3" y="446.9" width="6" height="5" rx="1.5" fill="#5e5e5e" stroke="#111" stroke-width="0.8"/><rect x="305.4" y="445.1" width="6" height="5" rx="1.5" fill="#5e5e5e" stroke="#111" stroke-width="0.8"/><rect x="313.5" y="443.4" width="6" height="5" rx="1.5" fill="#5e5e5e" stroke="#111" stroke-width="0.8"/><rect x="321.6" y="441.6" width="6" height="5" rx="1.5" fill="#5e5e5e" stroke="#111" stroke-width="0.8"/><rect x="329.7" y="439.8" width="6" height="5" rx="1.5" fill="#5e5e5e" stroke="#111" stroke-width="0.8"/><rect x="337.8" y="438.1" width="6" height="5" rx="1.5" fill="#5e5e5e" stroke="#111" stroke-width="0.8"/><rect x="345.9" y="436.3" width="6" height="5" rx="1.5" fill="#5e5e5e" stroke="#111" stroke-width="0.8"/><rect x="354.0" y="434.5" width="6" height="5" rx="1.5" fill="#5e5e5e" stroke="#111" stroke-width="0.8"/><rect x="362.1" y="432.8" width="6" height="5" rx="1.5" fill="#5e5e5e" stroke="#111" stroke-width="0.8"/><rect x="370.2" y="431.0" width="6" height="5" rx="1.5" fill="#5e5e5e" stroke="#111" stroke-width="0.8"/><rect x="378.3" y="429.2" width="6" height="5" rx="1.5" fill="#5e5e5e" stroke="#111" stroke-width="0.8"/><rect x="386.4" y="427.5" width="6" height="5" rx="1.5" fill="#5e5e5e" stroke="#111" stroke-width="0.8"/><rect x="394.5" y="425.7" width="6" height="5" rx="1.5" fill="#5e5e5e" stroke="#111" stroke-width="0.8"/><rect x="402.6" y="423.9" width="6" height="5" rx="1.5" fill="#5e5e5e" stroke="#111" stroke-width="0.8"/><rect x="410.7" y="422.2" width="6" height="5" rx="1.5" fill="#5e5e5e" stroke="#111" stroke-width="0.8"/><path d="M421,400 L430,398 L432,440 L421,442 Z" fill="#777" stroke="#000" stroke-width="1" /><polygon points="424.0,790.0 432.0,787.0 432.0,840.0 440.0,840.0 440.0,850.0 412.0,852.0 412.0,845.0 424.0,838.0" fill="#555" stroke="#000" stroke-width="1" stroke-linejoin="round" /><rect x="349.6" y="144.5" width="10" height="15" fill="url(#gb)" stroke="#000"/><ellipse cx="354.6" cy="144.5" rx="5" ry="1.8" fill="#777" stroke="#000" stroke-width="0.8"/><ellipse cx="354.6" cy="334.5" rx="19.5" ry="4.6" fill="#6a6a6a" stroke="#000"/><ellipse cx="354.6" cy="332.0" rx="19.5" ry="4.6" fill="#8a8a8a" stroke="#000"/><path d="M339.6,316.4 L369.6,316.4 L369.6,334.0 Q354.6,338.0 339.6,334.0 Z" fill="url(#gb)" stroke="#000"/><path d="M339.6,159.5 L369.6,159.5 L369.6,197.5 Q354.6,201.5 339.6,197.5 Z" fill="url(#gb)" stroke="#000"/><ellipse cx="354.6" cy="159.5" rx="15" ry="4.2" fill="#858585" stroke="#000"/><path d="M349.6,144.5 L359.6,144.5 L359.6,159.5 Q354.6,161.5 349.6,159.5 Z" fill="url(#gb)" stroke="#000" stroke-width="0.9"/><path d="M339.6,318.4 L369.6,318.4 L369.6,323.4 Q354.6,327.4 339.6,323.4 Z" fill="url(#gd)" stroke="#000"/><path d="M339.6,309.4 Q354.6,313.4 369.6,309.4 L377.1,316.4 Q375.6,320.4 354.6,320.9 Q333.6,320.4 332.1,316.4 Z" fill="url(#gs)" stroke="#000"/><path d="M339.6,304.1 L369.6,304.1 L369.6,309.1 Q354.6,313.1 339.6,309.1 Z" fill="url(#gd)" stroke="#000"/><path d="M339.6,295.1 Q354.6,299.1 369.6,295.1 L377.1,302.1 Q375.6,306.1 354.6,306.6 Q333.6,306.1 332.1,302.1 Z" fill="url(#gs)" stroke="#000"/><path d="M339.6,289.8 L369.6,289.8 L369.6,294.8 Q354.6,298.8 339.6,294.8 Z" fill="url(#gd)" stroke="#000"/><path d="M339.6,280.8 Q354.6,284.8 369.6,280.8 L377.1,287.8 Q375.6,291.8 354.6,292.3 Q333.6,291.8 332.1,287.8 Z" fill="url(#gs)" stroke="#000"/><path d="M339.6,275.5 L369.6,275.5 L369.6,280.5 Q354.6,284.5 339.6,280.5 Z" fill="url(#gd)" stroke="#000"/><path d="M339.6,266.5 Q354.6,270.5 369.6,266.5 L377.1,273.5 Q375.6,277.5 354.6,278.0 Q333.6,277.5 332.1,273.5 Z" fill="url(#gs)" stroke="#000"/><path d="M339.6,261.2 L369.6,261.2 L369.6,266.2 Q354.6,270.2 339.6,266.2 Z" fill="url(#gd)" stroke="#000"/><path d="M339.6,252.2 Q354.6,256.2 369.6,252.2 L377.1,259.2 Q375.6,263.2 354.6,263.7 Q333.6,263.2 332.1,259.2 Z" fill="url(#gs)" stroke="#000"/><path d="M339.6,246.9 L369.6,246.9 L369.6,251.9 Q354.6,255.9 339.6,251.9 Z" fill="url(#gd)" stroke="#000"/><path d="M339.6,237.9 Q354.6,241.9 369.6,237.9 L377.1,244.9 Q375.6,248.9 354.6,249.4 Q333.6,248.9 332.1,244.9 Z" fill="url(#gs)" stroke="#000"/><path d="M339.6,232.6 L369.6,232.6 L369.6,237.6 Q354.6,241.6 339.6,237.6 Z" fill="url(#gd)" stroke="#000"/><path d="M339.6,223.6 Q354.6,227.6 369.6,223.6 L377.1,230.6 Q375.6,234.6 354.6,235.1 Q333.6,234.6 332.1,230.6 Z" fill="url(#gs)" stroke="#000"/><path d="M339.6,218.3 L369.6,218.3 L369.6,223.3 Q354.6,227.3 339.6,223.3 Z" fill="url(#gd)" stroke="#000"/><path d="M339.6,209.3 Q354.6,213.3 369.6,209.3 L377.1,216.3 Q375.6,220.3 354.6,220.8 Q333.6,220.3 332.1,216.3 Z" fill="url(#gs)" stroke="#000"/><path d="M339.6,204.0 L369.6,204.0 L369.6,209.0 Q354.6,213.0 339.6,209.0 Z" fill="url(#gd)" stroke="#000"/><path d="M339.6,195.0 Q354.6,199.0 369.6,195.0 L377.1,202.0 Q375.6,206.0 354.6,206.5 Q333.6,206.0 332.1,202.0 Z" fill="url(#gs)" stroke="#000"/><rect x="476.5" y="117" width="10" height="15" fill="url(#gb)" stroke="#000"/><ellipse cx="481.5" cy="117" rx="5" ry="1.8" fill="#777" stroke="#000" stroke-width="0.8"/><ellipse cx="481.5" cy="307.0" rx="19.5" ry="4.6" fill="#6a6a6a" stroke="#000"/><ellipse cx="481.5" cy="304.5" rx="19.5" ry="4.6" fill="#8a8a8a" stroke="#000"/><path d="M466.5,288.9 L496.5,288.9 L496.5,306.5 Q481.5,310.5 466.5,306.5 Z" fill="url(#gb)" stroke="#000"/><path d="M466.5,132 L496.5,132 L496.5,170 Q481.5,174 466.5,170 Z" fill="url(#gb)" stroke="#000"/><ellipse cx="481.5" cy="132" rx="15" ry="4.2" fill="#858585" stroke="#000"/><path d="M476.5,117 L486.5,117 L486.5,132 Q481.5,134 476.5,132 Z" fill="url(#gb)" stroke="#000" stroke-width="0.9"/><path d="M466.5,290.9 L496.5,290.9 L496.5,295.9 Q481.5,299.9 466.5,295.9 Z" fill="url(#gd)" stroke="#000"/><path d="M466.5,281.9 Q481.5,285.9 496.5,281.9 L504.0,288.9 Q502.5,292.9 481.5,293.4 Q460.5,292.9 459.0,288.9 Z" fill="url(#gs)" stroke="#000"/><path d="M466.5,276.6 L496.5,276.6 L496.5,281.6 Q481.5,285.6 466.5,281.6 Z" fill="url(#gd)" stroke="#000"/><path d="M466.5,267.6 Q481.5,271.6 496.5,267.6 L504.0,274.6 Q502.5,278.6 481.5,279.1 Q460.5,278.6 459.0,274.6 Z" fill="url(#gs)" stroke="#000"/><path d="M466.5,262.3 L496.5,262.3 L496.5,267.3 Q481.5,271.3 466.5,267.3 Z" fill="url(#gd)" stroke="#000"/><path d="M466.5,253.3 Q481.5,257.3 496.5,253.3 L504.0,260.3 Q502.5,264.3 481.5,264.8 Q460.5,264.3 459.0,260.3 Z" fill="url(#gs)" stroke="#000"/><path d="M466.5,248.0 L496.5,248.0 L496.5,253.0 Q481.5,257.0 466.5,253.0 Z" fill="url(#gd)" stroke="#000"/><path d="M466.5,239.0 Q481.5,243.0 496.5,239.0 L504.0,246.0 Q502.5,250.0 481.5,250.5 Q460.5,250.0 459.0,246.0 Z" fill="url(#gs)" stroke="#000"/><path d="M466.5,233.7 L496.5,233.7 L496.5,238.7 Q481.5,242.7 466.5,238.7 Z" fill="url(#gd)" stroke="#000"/><path d="M466.5,224.7 Q481.5,228.7 496.5,224.7 L504.0,231.7 Q502.5,235.7 481.5,236.2 Q460.5,235.7 459.0,231.7 Z" fill="url(#gs)" stroke="#000"/><path d="M466.5,219.4 L496.5,219.4 L496.5,224.4 Q481.5,228.4 466.5,224.4 Z" fill="url(#gd)" stroke="#000"/><path d="M466.5,210.4 Q481.5,214.4 496.5,210.4 L504.0,217.4 Q502.5,221.4 481.5,221.9 Q460.5,221.4 459.0,217.4 Z" fill="url(#gs)" stroke="#000"/><path d="M466.5,205.1 L496.5,205.1 L496.5,210.1 Q481.5,214.1 466.5,210.1 Z" fill="url(#gd)" stroke="#000"/><path d="M466.5,196.1 Q481.5,200.1 496.5,196.1 L504.0,203.1 Q502.5,207.1 481.5,207.6 Q460.5,207.1 459.0,203.1 Z" fill="url(#gs)" stroke="#000"/><path d="M466.5,190.8 L496.5,190.8 L496.5,195.8 Q481.5,199.8 466.5,195.8 Z" fill="url(#gd)" stroke="#000"/><path d="M466.5,181.8 Q481.5,185.8 496.5,181.8 L504.0,188.8 Q502.5,192.8 481.5,193.3 Q460.5,192.8 459.0,188.8 Z" fill="url(#gs)" stroke="#000"/><path d="M466.5,176.5 L496.5,176.5 L496.5,181.5 Q481.5,185.5 466.5,181.5 Z" fill="url(#gd)" stroke="#000"/><path d="M466.5,167.5 Q481.5,171.5 496.5,167.5 L504.0,174.5 Q502.5,178.5 481.5,179.0 Q460.5,178.5 459.0,174.5 Z" fill="url(#gs)" stroke="#000"/><rect x="603.3" y="89.5" width="10" height="15" fill="url(#gb)" stroke="#000"/><ellipse cx="608.3" cy="89.5" rx="5" ry="1.8" fill="#777" stroke="#000" stroke-width="0.8"/><ellipse cx="608.3" cy="279.5" rx="19.5" ry="4.6" fill="#6a6a6a" stroke="#000"/><ellipse cx="608.3" cy="277.0" rx="19.5" ry="4.6" fill="#8a8a8a" stroke="#000"/><path d="M593.3,261.4 L623.3,261.4 L623.3,279.0 Q608.3,283.0 593.3,279.0 Z" fill="url(#gb)" stroke="#000"/><path d="M593.3,104.5 L623.3,104.5 L623.3,142.5 Q608.3,146.5 593.3,142.5 Z" fill="url(#gb)" stroke="#000"/><ellipse cx="608.3" cy="104.5" rx="15" ry="4.2" fill="#858585" stroke="#000"/><path d="M603.3,89.5 L613.3,89.5 L613.3,104.5 Q608.3,106.5 603.3,104.5 Z" fill="url(#gb)" stroke="#000" stroke-width="0.9"/><path d="M593.3,263.4 L623.3,263.4 L623.3,268.4 Q608.3,272.4 593.3,268.4 Z" fill="url(#gd)" stroke="#000"/><path d="M593.3,254.39999999999998 Q608.3,258.4 623.3,254.39999999999998 L630.8,261.4 Q629.3,265.4 608.3,265.9 Q587.3,265.4 585.8,261.4 Z" fill="url(#gs)" stroke="#000"/><path d="M593.3,249.10000000000002 L623.3,249.10000000000002 L623.3,254.10000000000002 Q608.3,258.1 593.3,254.10000000000002 Z" fill="url(#gd)" stroke="#000"/><path d="M593.3,240.10000000000002 Q608.3,244.10000000000002 623.3,240.10000000000002 L630.8,247.10000000000002 Q629.3,251.10000000000002 608.3,251.60000000000002 Q587.3,251.10000000000002 585.8,247.10000000000002 Z" fill="url(#gs)" stroke="#000"/><path d="M593.3,234.8 L623.3,234.8 L623.3,239.8 Q608.3,243.8 593.3,239.8 Z" fill="url(#gd)" stroke="#000"/><path d="M593.3,225.8 Q608.3,229.8 623.3,225.8 L630.8,232.8 Q629.3,236.8 608.3,237.3 Q587.3,236.8 585.8,232.8 Z" fill="url(#gs)" stroke="#000"/><path d="M593.3,220.5 L623.3,220.5 L623.3,225.5 Q608.3,229.5 593.3,225.5 Z" fill="url(#gd)" stroke="#000"/><path d="M593.3,211.5 Q608.3,215.5 623.3,211.5 L630.8,218.5 Q629.3,222.5 608.3,223.0 Q587.3,222.5 585.8,218.5 Z" fill="url(#gs)" stroke="#000"/><path d="M593.3,206.2 L623.3,206.2 L623.3,211.2 Q608.3,215.2 593.3,211.2 Z" fill="url(#gd)" stroke="#000"/><path d="M593.3,197.2 Q608.3,201.2 623.3,197.2 L630.8,204.2 Q629.3,208.2 608.3,208.7 Q587.3,208.2 585.8,204.2 Z" fill="url(#gs)" stroke="#000"/><path d="M593.3,191.9 L623.3,191.9 L623.3,196.9 Q608.3,200.9 593.3,196.9 Z" fill="url(#gd)" stroke="#000"/><path d="M593.3,182.9 Q608.3,186.9 623.3,182.9 L630.8,189.9 Q629.3,193.9 608.3,194.4 Q587.3,193.9 585.8,189.9 Z" fill="url(#gs)" stroke="#000"/><path d="M593.3,177.6 L623.3,177.6 L623.3,182.6 Q608.3,186.6 593.3,182.6 Z" fill="url(#gd)" stroke="#000"/><path d="M593.3,168.6 Q608.3,172.6 623.3,168.6 L630.8,175.6 Q629.3,179.6 608.3,180.1 Q587.3,179.6 585.8,175.6 Z" fill="url(#gs)" stroke="#000"/><path d="M593.3,163.3 L623.3,163.3 L623.3,168.3 Q608.3,172.3 593.3,168.3 Z" fill="url(#gd)" stroke="#000"/><path d="M593.3,154.3 Q608.3,158.3 623.3,154.3 L630.8,161.3 Q629.3,165.3 608.3,165.8 Q587.3,165.3 585.8,161.3 Z" fill="url(#gs)" stroke="#000"/><path d="M593.3,149.0 L623.3,149.0 L623.3,154.0 Q608.3,158.0 593.3,154.0 Z" fill="url(#gd)" stroke="#000"/><path d="M593.3,140.0 Q608.3,144.0 623.3,140.0 L630.8,147.0 Q629.3,151.0 608.3,151.5 Q587.3,151.0 585.8,147.0 Z" fill="url(#gs)" stroke="#000"/><rect x="440.7" y="359.5" width="18" height="7" fill="url(#gb)" stroke="#000"/><ellipse cx="449.7" cy="366.5" rx="9.5" ry="2.5" fill="#555" stroke="#000"/><path d="M440.7,351.0 L458.7,351.0 L462.2,355.0 Q461.7,359.0 449.7,359.0 Q437.7,359.0 437.2,355.0 Z" fill="url(#gs)" stroke="#000"/><path d="M440.7,342.5 L458.7,342.5 L462.2,346.5 Q461.7,350.5 449.7,350.5 Q437.7,350.5 437.2,346.5 Z" fill="url(#gs)" stroke="#000"/><path d="M440.7,334.0 L458.7,334.0 L462.2,338.0 Q461.7,342.0 449.7,342.0 Q437.7,342.0 437.2,338.0 Z" fill="url(#gs)" stroke="#000"/><path d="M440.7,325.5 L458.7,325.5 L462.2,329.5 Q461.7,333.5 449.7,333.5 Q437.7,333.5 437.2,329.5 Z" fill="url(#gs)" stroke="#000"/><path d="M440.7,317 L458.7,317 L462.2,321 Q461.7,325 449.7,325 Q437.7,325 437.2,321 Z" fill="url(#gs)" stroke="#000"/><rect x="443.7" y="309" width="12" height="9" fill="url(#gb)" stroke="#000"/><ellipse cx="449.7" cy="309.5" rx="9" ry="3" fill="#777" stroke="#000"/><rect x="440.7" y="287" width="11" height="22" fill="#323232" stroke="#000"/><rect x="451.7" y="289" width="7" height="20" fill="#8a8a8a" stroke="#000" stroke-width="0.8"/><path d="M440.7,287 L447.7,285 L458.7,287 L451.7,289 Z" fill="#6a6a6a" stroke="#000" stroke-width="0.8"/><rect x="516.5" y="343.2" width="18" height="7" fill="url(#gb)" stroke="#000"/><ellipse cx="525.5" cy="350.2" rx="9.5" ry="2.5" fill="#555" stroke="#000"/><path d="M516.5,334.7 L534.5,334.7 L538.0,338.7 Q537.5,342.7 525.5,342.7 Q513.5,342.7 513.0,338.7 Z" fill="url(#gs)" stroke="#000"/><path d="M516.5,326.2 L534.5,326.2 L538.0,330.2 Q537.5,334.2 525.5,334.2 Q513.5,334.2 513.0,330.2 Z" fill="url(#gs)" stroke="#000"/><path d="M516.5,317.7 L534.5,317.7 L538.0,321.7 Q537.5,325.7 525.5,325.7 Q513.5,325.7 513.0,321.7 Z" fill="url(#gs)" stroke="#000"/><path d="M516.5,309.2 L534.5,309.2 L538.0,313.2 Q537.5,317.2 525.5,317.2 Q513.5,317.2 513.0,313.2 Z" fill="url(#gs)" stroke="#000"/><path d="M516.5,300.7 L534.5,300.7 L538.0,304.7 Q537.5,308.7 525.5,308.7 Q513.5,308.7 513.0,304.7 Z" fill="url(#gs)" stroke="#000"/><rect x="519.5" y="292.7" width="12" height="9" fill="url(#gb)" stroke="#000"/><ellipse cx="525.5" cy="293.2" rx="9" ry="3" fill="#777" stroke="#000"/><rect x="516.5" y="270.7" width="11" height="22" fill="#323232" stroke="#000"/><rect x="527.5" y="272.7" width="7" height="20" fill="#8a8a8a" stroke="#000" stroke-width="0.8"/><path d="M516.5,270.7 L523.5,268.7 L534.5,270.7 L527.5,272.7 Z" fill="#6a6a6a" stroke="#000" stroke-width="0.8"/><rect x="592" y="325.5" width="18" height="7" fill="url(#gb)" stroke="#000"/><ellipse cx="601" cy="332.5" rx="9.5" ry="2.5" fill="#555" stroke="#000"/><path d="M592,317.0 L610,317.0 L613.5,321.0 Q613,325.0 601,325.0 Q589,325.0 588.5,321.0 Z" fill="url(#gs)" stroke="#000"/><path d="M592,308.5 L610,308.5 L613.5,312.5 Q613,316.5 601,316.5 Q589,316.5 588.5,312.5 Z" fill="url(#gs)" stroke="#000"/><path d="M592,300.0 L610,300.0 L613.5,304.0 Q613,308.0 601,308.0 Q589,308.0 588.5,304.0 Z" fill="url(#gs)" stroke="#000"/><path d="M592,291.5 L610,291.5 L613.5,295.5 Q613,299.5 601,299.5 Q589,299.5 588.5,295.5 Z" fill="url(#gs)" stroke="#000"/><path d="M592,283 L610,283 L613.5,287 Q613,291 601,291 Q589,291 588.5,287 Z" fill="url(#gs)" stroke="#000"/><rect x="595" y="275" width="12" height="9" fill="url(#gb)" stroke="#000"/><ellipse cx="601" cy="275.5" rx="9" ry="3" fill="#777" stroke="#000"/><rect x="592" y="253" width="11" height="22" fill="#323232" stroke="#000"/><rect x="603" y="255" width="7" height="20" fill="#8a8a8a" stroke="#000" stroke-width="0.8"/><path d="M592,253 L599,251 L610,253 L603,255 Z" fill="#6a6a6a" stroke="#000" stroke-width="0.8"/><rect x="668" y="308.5" width="18" height="7" fill="url(#gb)" stroke="#000"/><ellipse cx="677" cy="315.5" rx="9.5" ry="2.5" fill="#555" stroke="#000"/><path d="M668,300.0 L686,300.0 L689.5,304.0 Q689,308.0 677,308.0 Q665,308.0 664.5,304.0 Z" fill="url(#gs)" stroke="#000"/><path d="M668,291.5 L686,291.5 L689.5,295.5 Q689,299.5 677,299.5 Q665,299.5 664.5,295.5 Z" fill="url(#gs)" stroke="#000"/><path d="M668,283.0 L686,283.0 L689.5,287.0 Q689,291.0 677,291.0 Q665,291.0 664.5,287.0 Z" fill="url(#gs)" stroke="#000"/><path d="M668,274.5 L686,274.5 L689.5,278.5 Q689,282.5 677,282.5 Q665,282.5 664.5,278.5 Z" fill="url(#gs)" stroke="#000"/><path d="M668,266 L686,266 L689.5,270 Q689,274 677,274 Q665,274 664.5,270 Z" fill="url(#gs)" stroke="#000"/><rect x="671" y="258" width="12" height="9" fill="url(#gb)" stroke="#000"/><ellipse cx="677" cy="258.5" rx="9" ry="3" fill="#777" stroke="#000"/><rect x="668" y="236" width="11" height="22" fill="#323232" stroke="#000"/><rect x="679" y="238" width="7" height="20" fill="#8a8a8a" stroke="#000" stroke-width="0.8"/><path d="M668,236 L675,234 L686,236 L679,238 Z" fill="#6a6a6a" stroke="#000" stroke-width="0.8"/></svg>
</body></html>
